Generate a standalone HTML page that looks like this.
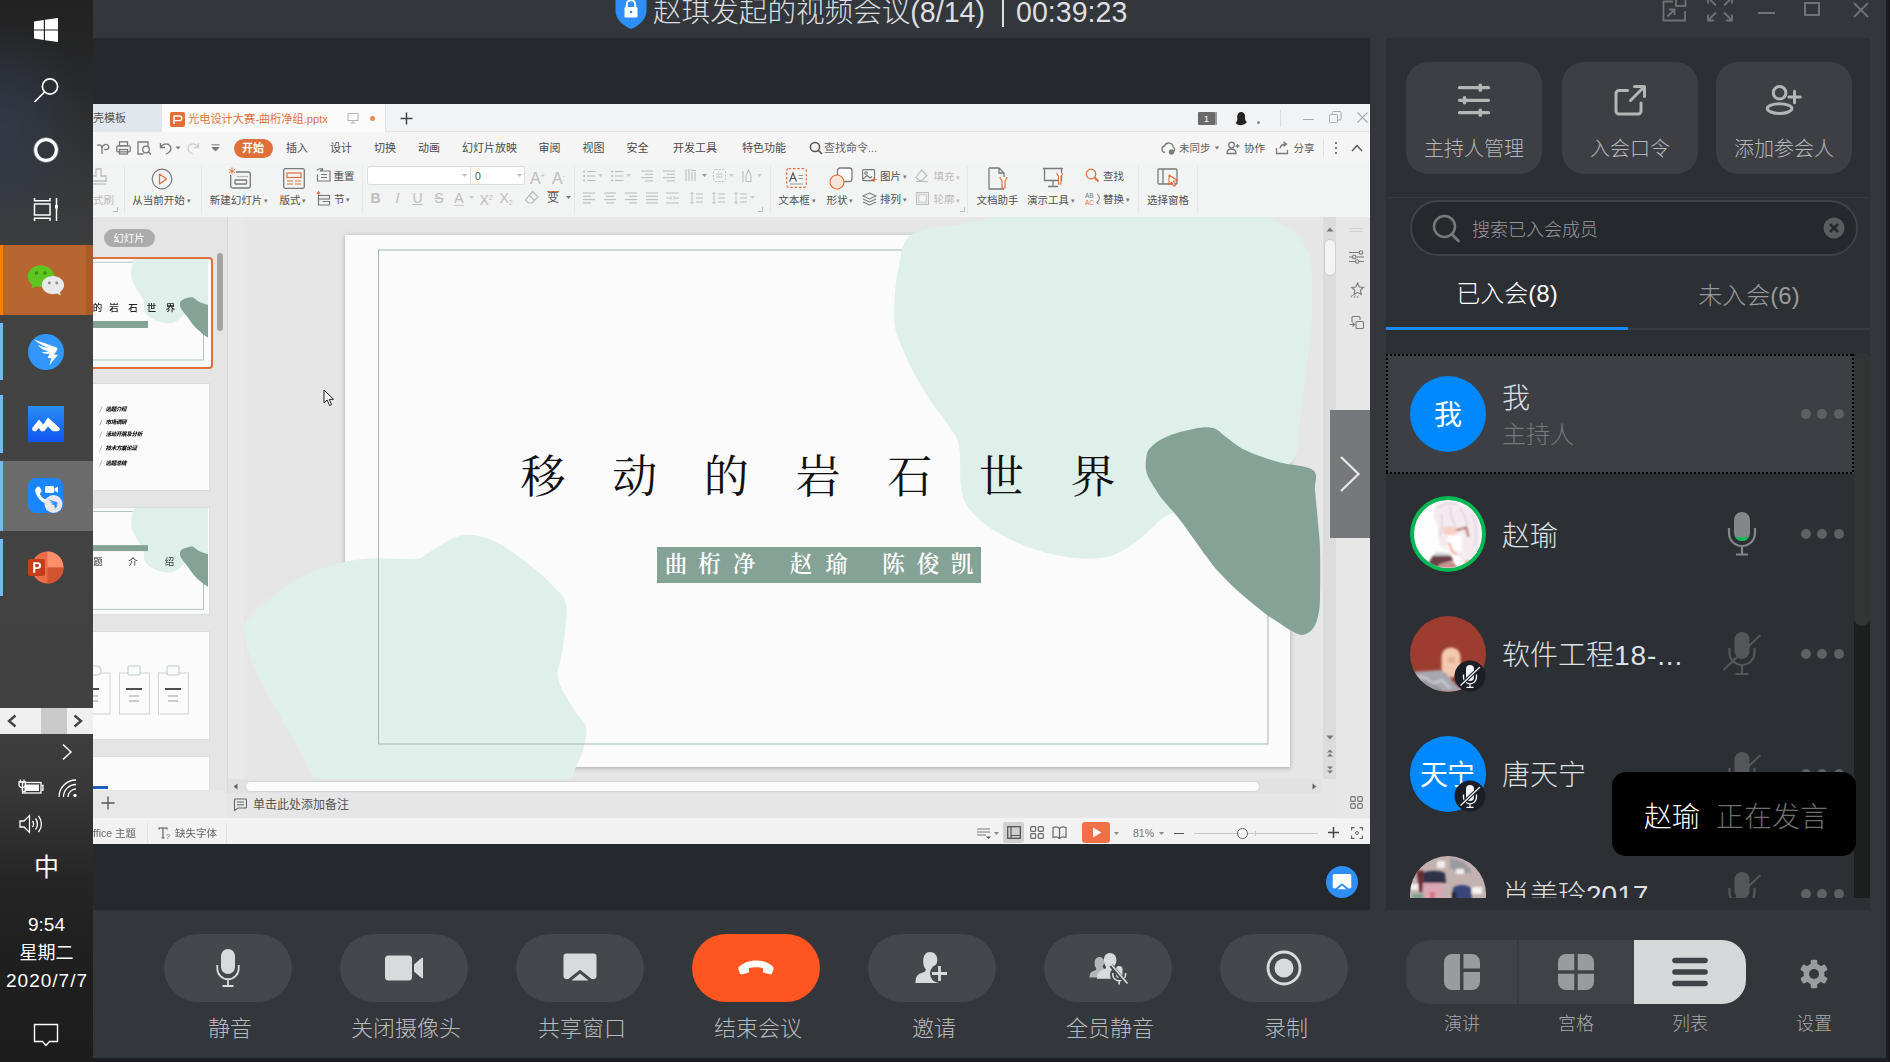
<!DOCTYPE html>
<html lang="zh-CN">
<head>
<meta charset="utf-8">
<title>视频会议</title>
<style>
*{box-sizing:border-box;margin:0;padding:0}
html,body{width:1890px;height:1062px;overflow:hidden;background:#33363b}
body{position:relative;font-family:"Liberation Sans","Noto Sans CJK SC",sans-serif;color:#d6d7d9;font-weight:300}
.abs{position:absolute}
svg{display:block;overflow:visible}
/* ---------- windows taskbar ---------- */
#taskbar{left:0;top:0;width:93px;height:1062px;background:radial-gradient(ellipse 90px 110px at 0px 130px,rgba(52,62,80,.75),rgba(52,62,80,0) 100%),linear-gradient(180deg,#222 0px,#28292b 90px,#37383a 190px,#424242 300px,#434343 400px,#414141 700px,#383838 790px,#252525 880px,#1f1f1f 960px,#1d1d1d 1062px)}
#taskbar .tile{left:0;width:93px}
#taskbar .bar{left:0;width:3px;background:#76b9ed}
#taskbar .txt{font-weight:400;left:0;width:93px;text-align:center;color:#fff;font-size:19px;line-height:22px}
/* ---------- meeting window ---------- */
#titlebar{left:93px;top:0;width:1797px;height:38px;background:#33363b}
#title{left:653px;top:-8.500px;font-size:28.600px;line-height:40px;color:#dddee0;white-space:nowrap}
#stage{left:93px;top:38px;width:1277px;height:872px;background:#25282d}
#panel{left:1386px;top:38px;width:484px;height:872px;background:#2c2f34;overflow:hidden}
#bottombar{left:93px;top:910px;width:1797px;height:148px;background:#33363b}
#bottomline{left:93px;top:1058px;width:1797px;height:4px;background:#1c1f28;border-bottom:1px solid #161616}
#rightline{left:1886px;top:0;width:4px;height:1062px;background:#1b1e25;border-right:1px solid #141414}
#wps{font-weight:400;left:93px;top:104px;width:1277px;height:739.500px;overflow:hidden;background:#e6e6e6}
#wpsin{left:-93px;top:-104px;width:1890px;height:1062px;filter:blur(.35px)}
/* ---------- bottom buttons ---------- */
.pill{width:128px;height:68px;border-radius:34px;background:#44474c;top:934px}
.plabel{top:1013.500px;margin-left:2px;width:200px;text-align:center;font-size:22px;line-height:30px;color:#b9babc}
/* ---------- right panel ---------- */
.pbtn{top:24px;width:136px;height:112px;border-radius:22px;background:#3d3f44}
.pbtn .l{left:0;top:72px;width:136px;text-align:center;font-size:20px;line-height:30px;color:#b6b7b9;font-weight:300}
.row{left:0;width:468px;height:120px}
.row .name{left:116px;font-size:28px;line-height:40px;color:#dcdddf;white-space:nowrap}
.row .dots{left:415px;top:55px}
.dots{white-space:nowrap;font-size:0}.dots i{display:inline-block;width:10px;height:10px;border-radius:5px;background:#5e6064;margin-right:6.400px;vertical-align:top}
.av{left:24px;top:23px;width:74px;height:74px;border-radius:50%}
</style>
</head>
<body>
<!-- ================= WINDOWS TASKBAR ================= -->
<div id="taskbar" class="abs">
  <!-- windows logo -->
  <svg class="abs" style="left:34px;top:18px" width="24" height="24" viewBox="0 0 24 24"><path fill="#fff" d="M0 3.4 9.8 2v9.4H0zM11 1.8 24 0v11.4H11zM0 12.6h9.8V22L0 20.6zM11 12.6h13V24l-13-1.8z"/></svg>
  <!-- search -->
  <svg class="abs" style="left:32px;top:76px" width="28" height="28" viewBox="0 0 28 28"><circle cx="18" cy="10.5" r="7.6" fill="none" stroke="#fff" stroke-width="1.7"/><path d="M12.6 16 2.5 26" stroke="#fff" stroke-width="1.7" fill="none"/></svg>
  <!-- cortana -->
  <svg class="abs" style="left:32px;top:136px" width="28" height="28" viewBox="0 0 28 28"><circle cx="14" cy="14" r="10.3" fill="none" stroke="#fff" stroke-width="3.2"/><circle cx="14" cy="14" r="12.4" fill="none" stroke="#cfcfcf" stroke-width="0.8" opacity=".6"/></svg>
  <!-- task view -->
  <svg class="abs" style="left:33px;top:197px" width="26" height="25" viewBox="0 0 26 25"><g fill="none" stroke="#fff" stroke-width="1.500"><path d="M1.500 1v2.800h15.500V1M1.500 24v-2.800h15.500V24"/><rect x="1.500" y="7" width="15.500" height="11"/><path d="M23.500 1v23"/></g><rect x="22" y="8" width="3" height="3.500" fill="#fff"/></svg>
  <!-- wechat tile -->
  <div class="abs tile" style="top:245px;height:70px;background:#b76630"></div>
  <div class="abs" style="left:86px;top:245px;width:7px;height:70px;background:#a65c2b"></div>
  <div class="abs" style="left:0;top:245px;width:3px;height:70px;background:#ff7c00"></div>
  <svg class="abs" style="left:27px;top:264px" width="38" height="32" viewBox="0 0 38 32">
    <path fill="#5dc621" d="M14 1.5C6.5 1.5.8 6.3.8 12.3c0 3.4 1.9 6.4 4.8 8.4L4.2 24.6l4.7-2.4c1.6.5 3.300.8 5.100.8 7.500 0 13.200-4.800 13.200-10.700S21.500 1.500 14 1.500z"/>
    <circle cx="9.500" cy="9" r="1.700" fill="#3a8a12"/><circle cx="18" cy="9" r="1.700" fill="#3a8a12"/>
    <path fill="#e9e9e9" d="M26 12c-6.300 0-11.200 4.100-11.200 9.100s4.900 9.100 11.200 9.100c1.400 0 2.700-.2 4-.6l3.900 2-1.100-3.300c2.600-1.700 4.300-4.300 4.300-7.200 0-5-4.900-9.100-11.100-9.100z"/>
    <circle cx="22.300" cy="19" r="1.400" fill="#8a8a8a"/><circle cx="29.700" cy="19" r="1.400" fill="#8a8a8a"/>
  </svg>
  <!-- dingtalk -->
  <div class="abs bar" style="top:323px;height:57px"></div>
  <svg class="abs" style="left:28px;top:334px" width="36" height="36" viewBox="0 0 36 36"><circle cx="18" cy="18" r="18" fill="#3296fa"/><path fill="#fff" transform="translate(1 -1)" d="M5 6.500c4.500 1.600 13.500 4.300 22.500 8 1.300.6 1 1.700.6 2.600-.6 1.300-2.800 4.600-2.800 4.600h3.800l-8.700 10.500 1.900-7.200h-3.600l1.800-4.400c-1.900.4-5.500.4-8.100-1.900 0 0 4.900.6 7.500-.4-3.600-.4-8.700-2.300-10.700-6.200 3.200 1.500 8.100 2.800 10.300 2.800-4.500-1.700-11.300-4.900-14.500-8.400z"/></svg>
  <!-- blue square app -->
  <div class="abs bar" style="top:395px;height:58px"></div>
  <svg class="abs" style="left:28px;top:406px" width="36" height="36" viewBox="0 0 36 36"><defs><linearGradient id="gm" x1="0" y1="0" x2="0" y2="1"><stop offset="0" stop-color="#2a8cf5"/><stop offset="1" stop-color="#0f55f0"/></linearGradient></defs><rect width="36" height="36" fill="url(#gm)"/><path fill="#fff" d="M4.500 21.500 11 13.500l4.200 5 4.800-7 11.500 10.500c.8 1.800-.2 3.300-2 3.300h-4.700L20 20.500l-3.800 4.800H13L10.800 22 8 25.300H6c-1.500-.5-2.300-2-1.500-3.800z"/></svg>
  <!-- active meeting tile -->
  <div class="abs tile" style="top:461px;height:70px;background:#6b6b6b"></div>
  <div class="abs bar" style="top:461px;height:70px"></div>
  <svg class="abs" style="left:28px;top:478px" width="36" height="36" viewBox="0 0 36 36"><rect width="35" height="35" rx="8" fill="#1a85ff"/><path fill="#fff" d="M8.800 9.300c1.200-1.200 2.400-1 3.100.2l1.300 2.300c.6 1.100.3 2-.6 2.800-.8.700-.8 1.500-.2 2.500.9 1.500 2 2.700 3.500 3.700.9.600 1.700.5 2.400-.3.800-.9 1.800-1.100 2.800-.500l2.200 1.400c1.200.8 1.300 2 .2 3.100-1.700 1.700-4 2-6.500.800-4.300-2.100-7.500-5.500-9.200-9.800-.9-2.400-.600-4.600 1-6.200z"/><rect x="17" y="8" width="9" height="7" rx="1.500" fill="#fff"/><path fill="#fff" d="M26.500 10.500 30 8.500v6.200l-3.500-2z"/><circle cx="25.500" cy="26" r="9" fill="#e8e8e8"/><path fill="#2b8cf0" d="M20.500 21.500c1.800.6 5.300 1.700 8.800 3.100.5.300.4.700.2 1-.200.500-1.100 1.800-1.100 1.800h1.500l-3.400 4.100.800-2.800h-1.400l.7-1.700c-.8.200-2.200.2-3.200-.800 0 0 1.900.3 2.900-.1-1.400-.200-3.400-.900-4.200-2.400 1.300.6 3.200 1.100 4 1.100-1.700-.7-4.400-1.900-5.600-3.300z"/></svg>
  <!-- powerpoint -->
  <div class="abs bar" style="top:539px;height:57px"></div>
  <svg class="abs" style="left:28px;top:550px" width="36" height="36" viewBox="0 0 36 36"><circle cx="19.500" cy="17.500" r="16" fill="#ed6c47"/><path d="M19.500 1.500a16 16 0 0 1 16 16h-16z" fill="#ff8f6b"/><path d="M19.500 17.500h16a16 16 0 0 1-16 16z" fill="#d35230"/><rect x="0" y="9" width="17" height="17" rx="1.800" fill="#c43e1c"/><path fill="#fff" d="M5.200 12.300h4.300c2.400 0 3.700 1.300 3.700 3.300 0 2.100-1.500 3.400-3.800 3.400H7.300v3.800H5.200zm2.100 1.700v3.300h1.800c1.200 0 1.900-.6 1.900-1.700 0-1-.7-1.600-1.900-1.600z"/></svg>
  <!-- scroller -->
  <div class="abs" style="left:0;top:708px;width:93px;height:26px;background:#f0f0f0"></div>
  <div class="abs" style="left:41px;top:708px;width:26px;height:26px;background:#c9c9c9"></div>
  <svg class="abs" style="left:6px;top:714px" width="12" height="14" viewBox="0 0 12 14"><path d="M9.500 1.500 3 7l6.500 5.500" fill="none" stroke="#444" stroke-width="2.400"/></svg>
  <svg class="abs" style="left:72px;top:714px" width="12" height="14" viewBox="0 0 12 14"><path d="M2.500 1.500 9 7l-6.500 5.500" fill="none" stroke="#444" stroke-width="2.400"/></svg>
  <!-- tray chevron -->
  <svg class="abs" style="left:61px;top:743px" width="12" height="18" viewBox="0 0 12 18"><path d="M2 1.500 10 9l-8 7.500" fill="none" stroke="#fff" stroke-width="1.500"/></svg>
  <!-- battery -->
  <svg class="abs" style="left:18px;top:779px" width="26" height="16" viewBox="0 0 26 16"><g fill="none" stroke="#fff" stroke-width="1.300"><rect x="4.500" y="3.500" width="18.500" height="10.500"/><path d="M23.500 6.500h1.500v4.500h-1.500"/><path d="M2.500 0.500v2.500M6 0.500v2.500M1 3h6.500v2.500c0 1.800-1.400 3-3.200 3S1 7.300 1 5.500zM4.300 8.500v2.500c0 1 .6 1.500 1.500 1.500h2"/></g><rect x="6.500" y="5.500" width="14.500" height="6.500" fill="#fff"/></svg>
  <!-- wifi -->
  <svg class="abs" style="left:58px;top:778px" width="22" height="20" viewBox="0 0 22 20"><g fill="none" stroke="#fff" stroke-width="1.300"><path d="M1 19C1 9.500 8.500 2 18 2"/><path d="M5.500 19C5.500 12 11 6.500 18 6.500"/><path d="M10 19c0-4.400 3.600-8 8-8"/></g><circle cx="17" cy="17.500" r="1.700" fill="#fff"/></svg>
  <!-- volume -->
  <svg class="abs" style="left:19px;top:814px" width="24" height="20" viewBox="0 0 24 20"><g fill="none" stroke="#fff" stroke-width="1.300"><path d="M1 7h4l5.500-5.500v17L5 13H1z"/><path d="M13.500 7c1.300 1.700 1.300 4.300 0 6"/><path d="M16.500 4.500c2.600 3.200 2.600 7.800 0 11"/><path d="M19.500 2c3.900 4.700 3.900 11.300 0 16"/></g></svg>
  <div class="abs txt" style="top:852px;font-size:25px;line-height:30px;font-weight:400">中</div>
  <div class="abs txt" style="top:914px">9:54</div>
  <div class="abs txt" style="top:942px;font-size:18px">星期二</div>
  <div class="abs txt" style="top:970px;letter-spacing:1px;text-indent:1px">2020/7/7</div>
  <!-- notifications -->
  <svg class="abs" style="left:33px;top:1023px" width="26" height="26" viewBox="0 0 26 26"><path d="M1.500 1.500h23v17h-8L13 22.500 9.500 18.500h-8z" fill="none" stroke="#fff" stroke-width="1.400"/></svg>
</div>

<!-- ================= TITLE BAR ================= -->
<div id="titlebar" class="abs"></div>
<svg class="abs" style="left:615px;top:-8px" width="32" height="38" viewBox="0 0 32 38"><path d="M16 0 31.500 5v13.500c0 8-6 14.500-15.500 18.500C6.500 33 0.500 26.500 0.500 18.500V5z" fill="#2d8ff5"/><rect x="9.500" y="15" width="13" height="10.500" rx="1.200" fill="#fff"/><path d="M11.800 15.500v-3a4.200 4.200 0 0 1 8.400 0v3" fill="none" stroke="#fff" stroke-width="2"/><circle cx="16" cy="20" r="1.300" fill="#2d8ff5"/></svg>
<div id="title" class="abs">赵琪发起的视频会议(8/14)<span style="display:inline-block;width:2px;height:28px;background:#dddee0;margin:0 12px 0 17px;vertical-align:-5px"></span>00:39:23</div>
<!-- window controls -->
<svg class="abs" style="left:1662px;top:-4px" width="26" height="26" viewBox="0 0 26 26"><g fill="none" stroke="#6f7276" stroke-width="1.800"><path d="M11 5.500H1.500v19H23V15"/><rect x="14" y="0.500" width="9.500" height="9.500"/><path d="M5.500 20.500 12 14M7 13.500h5.500V19"/></g></svg>
<svg class="abs" style="left:1707px;top:-4px" width="26" height="26" viewBox="0 0 26 26"><g fill="none" stroke="#6f7276" stroke-width="1.800"><path d="M1 5V1h0M25 5V1M1 7.500V1.500h6M19 1.500h6v6M1 18.500v6h6M25 18.500v6h-6M1.500 2 9 9.500M24.500 2 17 9.500M1.500 24 9 16.500M24.500 24 17 16.500"/></g></svg>
<div class="abs" style="left:1758px;top:12px;width:17px;height:2px;background:#6f7276"></div>
<div class="abs" style="left:1804px;top:2px;width:16px;height:14px;border:2px solid #6f7276"></div>
<svg class="abs" style="left:1853px;top:2px" width="16" height="16" viewBox="0 0 16 16"><path d="M1 1 15 15M15 1 1 15" stroke="#6f7276" stroke-width="1.800"/></svg>

<!-- ================= STAGE ================= -->
<div id="stage" class="abs"></div>
<!-- ===== shared screen (WPS) ===== -->
<div id="wps" class="abs"><div id="wpsin" class="abs">
<!--WPS-BEGIN-->
<div class="abs" style="left:93px;top:104px;width:1277px;height:28px;background:#f1f3f5;"></div>
<div class="abs" style="left:93px;top:131px;width:1277px;height:1px;background:#e3e5e7;"></div>
<div class="abs" style="left:93px;top:132px;width:1277px;height:31px;background:#f5f5f5;"></div>
<div class="abs" style="left:93px;top:163px;width:1277px;height:54px;background:#f2f3f3;"></div>
<div class="abs" style="left:93px;top:217px;width:1277px;height:602px;background:#e6e6e6;"></div>
<div class="abs" style="left:93px;top:818px;width:1277px;height:26px;background:#f2f2f2;"></div>
<div class="abs" style="left:93px;top:104px;width:68px;height:27px;background:#e2e7eb;"></div>
<div class="abs" style="left:93.0px;top:110.0px;font-size:11px;line-height:16px;color:#555;white-space:nowrap;">壳模板</div>
<div class="abs" style="left:161px;top:104px;width:225px;height:28px;background:#fbfbfb;border-left:1px solid #dfe3e6;border-right:1px solid #dfe3e6"></div>
<svg class="abs" style="left:170px;top:112px" width="15" height="15" viewBox="0 0 15 15"><rect width="15" height="15" rx="2" fill="#e0703a"/><path d="M4 12V4h5.500a2.300 2.300 0 0 1 0 4.600H4.500" fill="none" stroke="#fff" stroke-width="1.400"/></svg>
<div class="abs" style="left:188.0px;top:110.5px;font-size:11.2px;line-height:16px;color:#e0703a;white-space:nowrap;">光电设计大赛-曲桁净组.pptx</div>
<svg class="abs" style="left:347px;top:112px" width="12" height="12" viewBox="0 0 12 12"><rect x="1" y="1.500" width="10" height="7" fill="none" stroke="#b5b5b5" stroke-width="1"/><path d="M6 8.500v2.500M3.500 11h5" stroke="#b5b5b5" stroke-width="1"/></svg>
<div class="abs" style="left:370px;top:116px;width:5px;height:5px;background:#e98b4c;border-radius:50%"></div>
<svg class="abs" style="left:400px;top:112px" width="13" height="13" viewBox="0 0 13 13"><path d="M6.500 0.500v12M0.500 6.500h12" stroke="#444" stroke-width="1.500"/></svg>
<div class="abs" style="left:1198px;top:112px;width:17px;height:13px;background:#6a6a6a;border-radius:1px"></div>
<div class="abs" style="left:1215px;top:112px;width:2px;height:13px;background:#9a9a9a;"></div>
<div class="abs" style="left:1198.5px;width:16px;text-align:center;top:110.5px;font-size:9px;line-height:16px;color:#fff;white-space:nowrap;">1</div>
<svg class="abs" style="left:1233px;top:110px" width="16" height="16" viewBox="0 0 16 16"><circle cx="8" cy="8" r="7.500" fill="#efefef"/><path d="M8 2c3 0 4.500 2.500 4 5.500-.3 2 .8 3.500 2 4.500A7.500 7.500 0 0 1 2.500 13c1.500-1 2-2.500 1.800-4.500C4 5 5 2 8 2z" fill="#222"/></svg>
<div class="abs" style="left:1257px;top:121px;width:3px;height:3px;background:#888;border-radius:50%"></div>
<div class="abs" style="left:1280px;top:110px;width:1px;height:17px;background:#dcdcdc;"></div>
<div class="abs" style="left:1303px;top:119px;width:11px;height:1px;background:#aaa;"></div>
<svg class="abs" style="left:1329px;top:111px" width="13" height="13" viewBox="0 0 13 13"><rect x="0.500" y="3.500" width="8" height="8" rx="1" fill="none" stroke="#aaa"/><path d="M3.500 3V1.500a1 1 0 0 1 1-1h6.500a1 1 0 0 1 1 1V8a1 1 0 0 1-1 1H9" fill="none" stroke="#aaa"/></svg>
<svg class="abs" style="left:1357px;top:112px" width="11" height="11" viewBox="0 0 11 11"><path d="M0.500 0.500l10 10M10.500 0.500l-10 10" stroke="#aaa" stroke-width="1.100"/></svg>
<svg class="abs" style="left:96px;top:141px" width="14" height="14" viewBox="0 0 14 14"><path d="M6 13V7.500M6 7.500C6 4 3 3 1 4.500M6 7.500c0-4 5-5.500 6.500-2.500S10 9.500 8 8" fill="none" stroke="#7a7a7a" stroke-width="1.300"/></svg>
<svg class="abs" style="left:116px;top:141px" width="15" height="14" viewBox="0 0 15 14"><g fill="none" stroke="#7a7a7a" stroke-width="1.300"><rect x="3.500" y="0.800" width="8" height="4"/><rect x="0.800" y="4.800" width="13.400" height="6" rx="1"/><rect x="3.500" y="8.500" width="8" height="4.500"/></g></svg>
<svg class="abs" style="left:137px;top:141px" width="15" height="14" viewBox="0 0 15 14"><g fill="none" stroke="#7a7a7a" stroke-width="1.300"><path d="M11 6V1H1v12h5.500"/><circle cx="9" cy="8.500" r="3.300"/><path d="M11.500 11l2.500 2.500"/></g></svg>
<svg class="abs" style="left:159px;top:141px" width="14" height="14" viewBox="0 0 14 14"><path d="M1.500 2v4.500H6M1.800 6.300C3 3.500 6.500 2 9.500 3.500c3 1.700 3.300 5.800.300 8L7 13" fill="none" stroke="#7a7a7a" stroke-width="1.400"/></svg>
<svg class="abs" style="left:175px;top:146px" width="6" height="4" viewBox="0 0 6 4"><path d="M0.500 0.500h5L3 3.500z" fill="#7a7a7a"/></svg>
<svg class="abs" style="left:186px;top:141px" width="14" height="14" viewBox="0 0 14 14"><path d="M12.500 2v4.500H8M12.200 6.300C11 3.500 7.500 2 4.500 3.500c-3 1.700-3.300 5.800-.300 8L7 13" fill="none" stroke="#cfcfcf" stroke-width="1.400"/></svg>
<svg class="abs" style="left:211px;top:144px" width="9" height="8" viewBox="0 0 9 8"><path d="M0.500 0.800h8M1 3.500l3.500 3.500L8 3.500z" fill="#7a7a7a" stroke="#7a7a7a" stroke-width="1"/></svg>
<div class="abs" style="left:233.5px;top:139px;width:39px;height:18.5px;background:#e0703a;border-radius:9.500px"></div>
<div class="abs" style="left:233.0px;width:40px;text-align:center;top:140.0px;font-size:11px;line-height:16px;color:#fff;white-space:nowrap;font-weight:700">开始</div>
<div class="abs" style="left:252.0px;width:90px;text-align:center;top:140.0px;font-size:11px;line-height:16px;color:#4a4a4a;white-space:nowrap;">插入</div>
<div class="abs" style="left:296.0px;width:90px;text-align:center;top:140.0px;font-size:11px;line-height:16px;color:#4a4a4a;white-space:nowrap;">设计</div>
<div class="abs" style="left:340.0px;width:90px;text-align:center;top:140.0px;font-size:11px;line-height:16px;color:#4a4a4a;white-space:nowrap;">切换</div>
<div class="abs" style="left:384.0px;width:90px;text-align:center;top:140.0px;font-size:11px;line-height:16px;color:#4a4a4a;white-space:nowrap;">动画</div>
<div class="abs" style="left:444.5px;width:90px;text-align:center;top:140.0px;font-size:11px;line-height:16px;color:#4a4a4a;white-space:nowrap;">幻灯片放映</div>
<div class="abs" style="left:504.5px;width:90px;text-align:center;top:140.0px;font-size:11px;line-height:16px;color:#4a4a4a;white-space:nowrap;">审阅</div>
<div class="abs" style="left:548.5px;width:90px;text-align:center;top:140.0px;font-size:11px;line-height:16px;color:#4a4a4a;white-space:nowrap;">视图</div>
<div class="abs" style="left:592.5px;width:90px;text-align:center;top:140.0px;font-size:11px;line-height:16px;color:#4a4a4a;white-space:nowrap;">安全</div>
<div class="abs" style="left:650.0px;width:90px;text-align:center;top:140.0px;font-size:11px;line-height:16px;color:#4a4a4a;white-space:nowrap;">开发工具</div>
<div class="abs" style="left:719.0px;width:90px;text-align:center;top:140.0px;font-size:11px;line-height:16px;color:#4a4a4a;white-space:nowrap;">特色功能</div>
<svg class="abs" style="left:809px;top:141px" width="14" height="14" viewBox="0 0 14 14"><circle cx="6" cy="6" r="4.600" fill="none" stroke="#555" stroke-width="1.500"/><path d="M9.300 9.300l3.700 3.700" stroke="#555" stroke-width="1.600"/></svg>
<div class="abs" style="left:824.0px;top:140.0px;font-size:11px;line-height:16px;color:#666;white-space:nowrap;">查找命令...</div>
<svg class="abs" style="left:1161px;top:141px" width="15" height="14" viewBox="0 0 15 14"><path d="M4 11.500a3.300 3.300 0 0 1-.500-6.500 4.500 4.500 0 0 1 8.700 1A2.800 2.800 0 0 1 12 11" fill="none" stroke="#7a7a7a" stroke-width="1.300"/><circle cx="10.500" cy="11" r="2.700" fill="#7a7a7a"/></svg>
<div class="abs" style="left:1179.0px;top:140.0px;font-size:10.5px;line-height:16px;color:#666;white-space:nowrap;">未同步</div>
<svg class="abs" style="left:1214px;top:146px" width="6" height="4" viewBox="0 0 6 4"><path d="M0.500 0.500h5L3 3.500z" fill="#7a7a7a"/></svg>
<svg class="abs" style="left:1226px;top:141px" width="14" height="14" viewBox="0 0 14 14"><g fill="none" stroke="#7a7a7a" stroke-width="1.300"><circle cx="5.500" cy="4" r="2.800"/><path d="M1 12.500c0-3 2-4.500 4.500-4.500s4.500 1.500 4.500 4.500zM9.500 5h4M11.500 3v4"/></g></svg>
<div class="abs" style="left:1244.0px;top:140.0px;font-size:10.5px;line-height:16px;color:#555;white-space:nowrap;">协作</div>
<svg class="abs" style="left:1275px;top:141px" width="14" height="14" viewBox="0 0 14 14"><path d="M1.500 7v5.500h11V9M5 7.500c.500-3 2.500-4.500 6-4.500M8.500 0.800 11.500 3 8.500 5.500" fill="none" stroke="#7a7a7a" stroke-width="1.300"/></svg>
<div class="abs" style="left:1293.5px;top:140.0px;font-size:10.5px;line-height:16px;color:#555;white-space:nowrap;">分享</div>
<div class="abs" style="left:1323px;top:139px;width:1px;height:18px;background:#e3e3e3;"></div>
<div class="abs" style="left:1334.5px;top:142px;width:2px;height:2px;background:#555;border-radius:50%"></div>
<div class="abs" style="left:1334.5px;top:147px;width:2px;height:2px;background:#555;border-radius:50%"></div>
<div class="abs" style="left:1334.5px;top:152px;width:2px;height:2px;background:#555;border-radius:50%"></div>
<svg class="abs" style="left:1351px;top:144px" width="12" height="8" viewBox="0 0 12 8"><path d="M1 7 6 1.500 11 7" fill="none" stroke="#555" stroke-width="1.300"/></svg>
<div class="abs" style="left:123.5px;top:166px;width:1px;height:48px;background:#e6e7e8;"></div>
<div class="abs" style="left:201px;top:166px;width:1px;height:48px;background:#e6e7e8;"></div>
<div class="abs" style="left:361.5px;top:166px;width:1px;height:48px;background:#e6e7e8;"></div>
<div class="abs" style="left:574px;top:166px;width:1px;height:48px;background:#e6e7e8;"></div>
<div class="abs" style="left:769.5px;top:166px;width:1px;height:48px;background:#e6e7e8;"></div>
<div class="abs" style="left:966.5px;top:166px;width:1px;height:48px;background:#e6e7e8;"></div>
<div class="abs" style="left:1137.5px;top:166px;width:1px;height:48px;background:#e6e7e8;"></div>
<div class="abs" style="left:1197px;top:166px;width:1px;height:48px;background:#e6e7e8;"></div>
<svg class="abs" style="left:93px;top:168px" width="16" height="20" viewBox="0 0 16 20"><path d="M3 1h5v7h5v5H-2V8h5z" fill="none" stroke="#bdbdbd" stroke-width="1.300"/><path d="M-2 16h15" stroke="#bdbdbd" stroke-width="1.300"/></svg>
<div class="abs" style="left:93.0px;top:192.0px;font-size:10.5px;line-height:16px;color:#bdbdbd;white-space:nowrap;">式刷</div>
<svg class="abs" style="left:113px;top:207px" width="5" height="5" viewBox="0 0 5 5"><path d="M4.500 0v4.500H0" fill="none" stroke="#bdbdbd"/></svg>
<svg class="abs" style="left:151px;top:168px" width="22" height="22" viewBox="0 0 22 22"><circle cx="11" cy="11" r="9.800" fill="none" stroke="#7a7a7a" stroke-width="1.200"/><path d="M8.500 6 15.500 11 8.500 16z" fill="none" stroke="#e0703a" stroke-width="1.200" stroke-linejoin="round"/></svg>
<div class="abs" style="left:116.5px;width:90px;text-align:center;top:192.0px;font-size:10.5px;line-height:16px;color:#505050;white-space:nowrap;">从当前开始<span style="font-size:7px;color:#777;vertical-align:1.500px"> ▾</span></div>
<svg class="abs" style="left:228px;top:167px" width="24" height="22" viewBox="0 0 24 22"><g fill="none" stroke="#7a7a7a" stroke-width="1.300"><rect x="2.700" y="5" width="19.600" height="16" rx="2"/><rect x="7" y="13" width="11.500" height="4" rx=".5"/></g><path d="M9 9.500h11" stroke="#b5b5b5" stroke-width="1.100"/><rect x="0" y="0" width="8" height="8" fill="#f2f3f3"/><path d="M4 0.500v7M1 2.300l6 3.400M7 2.300l-6 3.400" stroke="#e0703a" stroke-width=".9"/></svg>
<div class="abs" style="left:194.0px;width:90px;text-align:center;top:192.0px;font-size:10.5px;line-height:16px;color:#505050;white-space:nowrap;">新建幻灯片<span style="font-size:7px;color:#777;vertical-align:1.500px"> ▾</span></div>
<svg class="abs" style="left:283px;top:168px" width="22" height="21" viewBox="0 0 22 21"><g fill="none" stroke="#e0703a" stroke-width="1.200"><rect x="4" y="5" width="14" height="4.500"/><path d="M4 13h6M12 13h6M4 16h6M12 16h6"/></g><rect x="0.700" y="0.700" width="20.600" height="19.600" rx="1.500" fill="none" stroke="#7a7a7a" stroke-width="1.300"/></svg>
<div class="abs" style="left:263.0px;width:60px;text-align:center;top:192.0px;font-size:10.5px;line-height:16px;color:#505050;white-space:nowrap;">版式<span style="font-size:7px;color:#777;vertical-align:1.500px"> ▾</span></div>
<svg class="abs" style="left:316px;top:168px" width="15" height="14" viewBox="0 0 15 14"><g fill="none" stroke="#7a7a7a" stroke-width="1.200"><path d="M4 3h10v10H1.500V6.500"/><path d="M1 2.500c1-2 4-2.500 5.500-.500M6.500 0v2.500H4"/><path d="M5 6.500h6M5 9.500h6"/></g></svg>
<div class="abs" style="left:333.5px;top:167.5px;font-size:10.5px;line-height:16px;color:#505050;white-space:nowrap;">重置</div>
<svg class="abs" style="left:316px;top:191px" width="15" height="15" viewBox="0 0 15 15"><g fill="none" stroke="#7a7a7a" stroke-width="1.200"><rect x="2.500" y="4.500" width="11" height="3.500"/><path d="M2.500 8v6h11v-3.500h-7"/></g><path d="M2.500 0v4M0.800 1l3.400 2M4.200 1 0.800 3" stroke="#e0703a" stroke-width=".9"/></svg>
<div class="abs" style="left:334.0px;top:191.0px;font-size:10.5px;line-height:16px;color:#505050;white-space:nowrap;">节<span style="font-size:7px;color:#777;vertical-align:1.500px"> ▾</span></div>
<div class="abs" style="left:366.5px;top:166px;width:158.5px;height:19px;background:#fff;border:1px solid #dcdcdc;border-radius:3px"></div>
<div class="abs" style="left:469.5px;top:166px;width:1px;height:19px;background:#dcdcdc;"></div>
<svg class="abs" style="left:462px;top:174px" width="5" height="3" viewBox="0 0 5 3"><path d="M0 0h5L2.500 3z" fill="#bbb"/></svg>
<svg class="abs" style="left:517px;top:174px" width="5" height="3" viewBox="0 0 5 3"><path d="M0 0h5L2.500 3z" fill="#bbb"/></svg>
<div class="abs" style="left:475.0px;top:167.5px;font-size:10.5px;line-height:16px;color:#555;white-space:nowrap;">0</div>
<div class="abs" style="left:530.0px;top:167.5px;font-size:16px;line-height:16px;color:#bdbdbd;white-space:nowrap;font-family:Liberation Sans,sans-serif">A<sup style="font-size:7px;vertical-align:6px">+</sup></div>
<div class="abs" style="left:552.0px;top:167.5px;font-size:16px;line-height:16px;color:#bdbdbd;white-space:nowrap;font-family:Liberation Sans,sans-serif">A<sup style="font-size:7px;vertical-align:6px">-</sup></div>
<div class="abs" style="left:360.5px;width:30px;text-align:center;top:190.0px;font-size:14px;line-height:16px;color:#bdbdbd;white-space:nowrap;font-weight:700">B</div>
<div class="abs" style="left:382.5px;width:30px;text-align:center;top:190.0px;font-size:14px;line-height:16px;color:#bdbdbd;white-space:nowrap;font-style:italic">I</div>
<div class="abs" style="left:402.5px;width:30px;text-align:center;top:190.0px;font-size:14px;line-height:16px;color:#bdbdbd;white-space:nowrap;text-decoration:underline">U</div>
<div class="abs" style="left:424.0px;width:30px;text-align:center;top:190.0px;font-size:14px;line-height:16px;color:#bdbdbd;white-space:nowrap;text-decoration:line-through">S</div>
<div class="abs" style="left:444.0px;width:30px;text-align:center;top:190.0px;font-size:14px;line-height:16px;color:#bdbdbd;white-space:nowrap;"><span style="border-bottom:1.500px solid #ccc;display:inline-block;line-height:13px">A</span></div>
<div class="abs" style="left:471.0px;width:30px;text-align:center;top:190.0px;font-size:14px;line-height:16px;color:#bdbdbd;white-space:nowrap;">X<sup style="font-size:7px;vertical-align:5px">2</sup></div>
<div class="abs" style="left:491.0px;width:30px;text-align:center;top:190.0px;font-size:14px;line-height:16px;color:#bdbdbd;white-space:nowrap;">X<sub style="font-size:7px;vertical-align:-2px">2</sub></div>
<svg class="abs" style="left:469px;top:196px" width="5" height="3" viewBox="0 0 5 3"><path d="M0 0h5L2.500 3z" fill="#ccc"/></svg>
<svg class="abs" style="left:524px;top:190px" width="15" height="15" viewBox="0 0 15 15"><path d="M8.500 1.500 14 7 8 13H4.500L1.500 10zM5 5l5.500 5.500" fill="none" stroke="#bdbdbd" stroke-width="1.200"/></svg>
<div class="abs" style="left:543.0px;width:20px;text-align:center;top:190.0px;font-size:12px;line-height:16px;color:#555;white-space:nowrap;"><span style="border-top:1.500px solid #e0703a;display:inline-block;line-height:12px">变</span></div>
<svg class="abs" style="left:566px;top:196px" width="5" height="3" viewBox="0 0 5 3"><path d="M0 0h5L2.500 3z" fill="#777"/></svg>
<svg class="abs" style="left:583px;top:169.5px" width="13" height="12" viewBox="0 0 13 12"><circle cx="1.200" cy="1.5" r="1.100" fill="#bdbdbd"/><path d="M4 1.5h8.500" stroke="#bdbdbd" stroke-width="1.100"/><circle cx="1.200" cy="6.0" r="1.100" fill="#bdbdbd"/><path d="M4 6.0h8.500" stroke="#bdbdbd" stroke-width="1.100"/><circle cx="1.200" cy="10.5" r="1.100" fill="#bdbdbd"/><path d="M4 10.5h8.500" stroke="#bdbdbd" stroke-width="1.100"/></svg>
<svg class="abs" style="left:598px;top:174px" width="5" height="3" viewBox="0 0 5 3"><path d="M0 0h5L2.500 3z" fill="#ccc"/></svg>
<svg class="abs" style="left:611px;top:169.5px" width="13" height="12" viewBox="0 0 13 12"><circle cx="1.200" cy="1.5" r="1.100" fill="#bdbdbd"/><path d="M4 1.5h8.500" stroke="#bdbdbd" stroke-width="1.100"/><circle cx="1.200" cy="6.0" r="1.100" fill="#bdbdbd"/><path d="M4 6.0h8.500" stroke="#bdbdbd" stroke-width="1.100"/><circle cx="1.200" cy="10.5" r="1.100" fill="#bdbdbd"/><path d="M4 10.5h8.500" stroke="#bdbdbd" stroke-width="1.100"/></svg>
<svg class="abs" style="left:626px;top:174px" width="5" height="3" viewBox="0 0 5 3"><path d="M0 0h5L2.500 3z" fill="#ccc"/></svg>
<svg class="abs" style="left:641px;top:169.5px" width="12" height="12" viewBox="0 0 12 12"><path d="M0 1.0h12" stroke="#bdbdbd" stroke-width="1.100"/><path d="M4 4.3h8" stroke="#bdbdbd" stroke-width="1.100"/><path d="M0 7.6h12" stroke="#bdbdbd" stroke-width="1.100"/><path d="M4 10.9h8" stroke="#bdbdbd" stroke-width="1.100"/></svg>
<svg class="abs" style="left:662.5px;top:169.5px" width="12" height="12" viewBox="0 0 12 12"><path d="M0 1.0h12" stroke="#bdbdbd" stroke-width="1.100"/><path d="M4 4.3h8" stroke="#bdbdbd" stroke-width="1.100"/><path d="M0 7.6h12" stroke="#bdbdbd" stroke-width="1.100"/><path d="M4 10.9h8" stroke="#bdbdbd" stroke-width="1.100"/></svg>
<svg class="abs" style="left:685px;top:169px" width="13" height="13" viewBox="0 0 13 13"><path d="M1 0v12M4 0v12M7 3v9M10 3v9M6 1.500h5" stroke="#bdbdbd" stroke-width="1.100" fill="none"/></svg>
<svg class="abs" style="left:702px;top:174px" width="5" height="3" viewBox="0 0 5 3"><path d="M0 0h5L2.500 3z" fill="#999"/></svg>
<svg class="abs" style="left:713px;top:169px" width="13" height="13" viewBox="0 0 13 13"><rect x="0.500" y="0.500" width="12" height="12" rx="2" fill="none" stroke="#bdbdbd" stroke-dasharray="2 1.500"/><path d="M3.500 5h6M3.500 8h6" stroke="#bdbdbd"/></svg>
<svg class="abs" style="left:729px;top:174px" width="5" height="3" viewBox="0 0 5 3"><path d="M0 0h5L2.500 3z" fill="#ccc"/></svg>
<svg class="abs" style="left:742px;top:169px" width="12" height="13" viewBox="0 0 12 13"><path d="M1 2v11M4 6.500 6.500 1 9 6.500v6H4z" fill="none" stroke="#bdbdbd" stroke-width="1.100"/></svg>
<svg class="abs" style="left:757px;top:174px" width="5" height="3" viewBox="0 0 5 3"><path d="M0 0h5L2.500 3z" fill="#ccc"/></svg>
<svg class="abs" style="left:583px;top:192px" width="12" height="12" viewBox="0 0 12 12"><path d="M0 1.0h12" stroke="#bdbdbd" stroke-width="1.100"/><path d="M0 4.3h8" stroke="#bdbdbd" stroke-width="1.100"/><path d="M0 7.6h12" stroke="#bdbdbd" stroke-width="1.100"/><path d="M0 10.9h8" stroke="#bdbdbd" stroke-width="1.100"/></svg>
<svg class="abs" style="left:604px;top:192px" width="12" height="12" viewBox="0 0 12 12"><path d="M0 1.0h12" stroke="#bdbdbd" stroke-width="1.100"/><path d="M2 4.3h8" stroke="#bdbdbd" stroke-width="1.100"/><path d="M0 7.6h12" stroke="#bdbdbd" stroke-width="1.100"/><path d="M2 10.9h8" stroke="#bdbdbd" stroke-width="1.100"/></svg>
<svg class="abs" style="left:624.5px;top:192px" width="12" height="12" viewBox="0 0 12 12"><path d="M0 1.0h12" stroke="#bdbdbd" stroke-width="1.100"/><path d="M4 4.3h8" stroke="#bdbdbd" stroke-width="1.100"/><path d="M0 7.6h12" stroke="#bdbdbd" stroke-width="1.100"/><path d="M4 10.9h8" stroke="#bdbdbd" stroke-width="1.100"/></svg>
<svg class="abs" style="left:645.5px;top:192px" width="12" height="12" viewBox="0 0 12 12"><path d="M0 1.0h12" stroke="#bdbdbd" stroke-width="1.100"/><path d="M0 4.3h12" stroke="#bdbdbd" stroke-width="1.100"/><path d="M0 7.6h12" stroke="#bdbdbd" stroke-width="1.100"/><path d="M0 10.9h12" stroke="#bdbdbd" stroke-width="1.100"/></svg>
<svg class="abs" style="left:666px;top:192px" width="13" height="12" viewBox="0 0 13 12"><path d="M0 1h13M0 11h13M0 6h4M9 6h4M5 4.500v3M8 4.500v3" stroke="#bdbdbd" stroke-width="1.100"/></svg>
<svg class="abs" style="left:689.5px;top:192px" width="13" height="12" viewBox="0 0 13 12"><path d="M2 0.500v11M0.500 2 2 0.500 3.500 2M0.500 10 2 11.500 3.500 10M6 2h7M6 6h7M6 10h7" fill="none" stroke="#bdbdbd" stroke-width="1"/></svg>
<svg class="abs" style="left:711.5px;top:192px" width="13" height="12" viewBox="0 0 13 12"><path d="M2 0.500v11M0.500 2 2 0.500 3.500 2M0.500 10 2 11.500 3.500 10M6 2h7M6 6h7M6 10h7" fill="none" stroke="#bdbdbd" stroke-width="1"/></svg>
<svg class="abs" style="left:733.5px;top:192px" width="13" height="12" viewBox="0 0 13 12"><path d="M2 0.500v11M0.500 2 2 0.500 3.500 2M0.500 10 2 11.500 3.500 10M6 2h7M6 6h7M6 10h7" fill="none" stroke="#bdbdbd" stroke-width="1"/></svg>
<svg class="abs" style="left:750px;top:196px" width="5" height="3" viewBox="0 0 5 3"><path d="M0 0h5L2.500 3z" fill="#ccc"/></svg>
<svg class="abs" style="left:758px;top:207px" width="5" height="5" viewBox="0 0 5 5"><path d="M4.500 0v4.500H0" fill="none" stroke="#bdbdbd"/></svg>
<svg class="abs" style="left:786px;top:168px" width="21" height="20" viewBox="0 0 21 20"><rect x="0.700" y="0.700" width="19.600" height="18.600" rx="2" fill="none" stroke="#e0703a" stroke-width="1.200" stroke-dasharray="2.500 1.800"/><path d="M3.500 13.500 7 5l3.500 8.500M4.800 10.500h4.400" fill="none" stroke="#555" stroke-width="1.200"/><path d="M12.500 7.500h4.500M12.500 10.500h4.500M4 16h13" stroke="#999" stroke-width="1"/></svg>
<div class="abs" style="left:762.0px;width:70px;text-align:center;top:192.0px;font-size:10.5px;line-height:16px;color:#505050;white-space:nowrap;">文本框<span style="font-size:7px;color:#777;vertical-align:1.500px"> ▾</span></div>
<svg class="abs" style="left:829px;top:167px" width="24" height="23" viewBox="0 0 24 23"><rect x="8.500" y="1" width="14.500" height="13.500" rx="2.500" fill="#fff" stroke="#7a7a7a" stroke-width="1.300"/><circle cx="8" cy="15" r="7" fill="#f7e3d8" stroke="#e0703a" stroke-width="1.200"/></svg>
<div class="abs" style="left:810.0px;width:60px;text-align:center;top:192.0px;font-size:10.5px;line-height:16px;color:#505050;white-space:nowrap;">形状<span style="font-size:7px;color:#777;vertical-align:1.500px"> ▾</span></div>
<svg class="abs" style="left:862px;top:169px" width="15" height="13" viewBox="0 0 15 13"><g fill="none" stroke="#7a7a7a" stroke-width="1.100"><rect x="0.600" y="0.600" width="12" height="11" rx="1"/><circle cx="4" cy="4" r="1.300"/><path d="M1 10l4-3.500 3 2.500 2-1.500"/></g><path d="M12 8v5M9.500 10.500h5" stroke="#e0703a" stroke-width="1.100"/></svg>
<div class="abs" style="left:880.0px;top:168.0px;font-size:10.5px;line-height:16px;color:#505050;white-space:nowrap;">图片<span style="font-size:7px;color:#777;vertical-align:1.500px"> ▾</span></div>
<svg class="abs" style="left:915px;top:169px" width="15" height="13" viewBox="0 0 15 13"><path d="M6.500 1 12 6.500 7 11.500H4L1 8.500zM1 12.500h12" fill="none" stroke="#bdbdbd" stroke-width="1.100"/></svg>
<div class="abs" style="left:933.5px;top:168.0px;font-size:10.5px;line-height:16px;color:#bdbdbd;white-space:nowrap;">填充<span style="font-size:7px"> ▾</span></div>
<svg class="abs" style="left:862px;top:192px" width="15" height="14" viewBox="0 0 15 14"><path d="M7.500 1 14 4 7.500 7 1 4zM1 7l6.500 3L14 7M1 10l6.500 3L14 10" fill="none" stroke="#7a7a7a" stroke-width="1.100"/></svg>
<div class="abs" style="left:880.0px;top:191.0px;font-size:10.5px;line-height:16px;color:#505050;white-space:nowrap;">排列<span style="font-size:7px;color:#777;vertical-align:1.500px"> ▾</span></div>
<svg class="abs" style="left:916px;top:192px" width="13" height="13" viewBox="0 0 13 13"><rect x="0.600" y="0.600" width="11.800" height="11.800" fill="none" stroke="#bdbdbd" stroke-width="1.100"/><rect x="2.800" y="2.800" width="7.400" height="7.400" fill="none" stroke="#bdbdbd" stroke-width=".8"/></svg>
<div class="abs" style="left:933.5px;top:191.0px;font-size:10.5px;line-height:16px;color:#bdbdbd;white-space:nowrap;">轮廓<span style="font-size:7px"> ▾</span></div>
<svg class="abs" style="left:960px;top:207px" width="5" height="5" viewBox="0 0 5 5"><path d="M4.500 0v4.500H0" fill="none" stroke="#bdbdbd"/></svg>
<svg class="abs" style="left:988px;top:167px" width="20" height="23" viewBox="0 0 20 23"><path d="M1 1h10l5 5v5M16 22H1V1M11 1v5h5" fill="none" stroke="#7a7a7a" stroke-width="1.300"/><path d="M12 10c0 2 1 3 2 3.500V21h3v-7.500c1-.500 2-1.500 2-3.500" fill="#fff" stroke="#e0703a" stroke-width="1.200"/></svg>
<div class="abs" style="left:962.5px;width:70px;text-align:center;top:192.0px;font-size:10.5px;line-height:16px;color:#505050;white-space:nowrap;">文档助手</div>
<svg class="abs" style="left:1042px;top:167px" width="23" height="23" viewBox="0 0 23 23"><g fill="none" stroke="#7a7a7a" stroke-width="1.300"><path d="M1 1.500h20M2.500 1.500v12h17v-12M11 13.500v5M6 19.500h10"/></g><path d="M15 6c0 2 1 2.500 1.500 3v8h2.500V9c.500-.500 1.500-1 1.500-3" fill="#fff" stroke="#e0703a" stroke-width="1.100"/></svg>
<div class="abs" style="left:1016.0px;width:70px;text-align:center;top:192.0px;font-size:10.5px;line-height:16px;color:#505050;white-space:nowrap;">演示工具<span style="font-size:7px;color:#777;vertical-align:1.500px"> ▾</span></div>
<svg class="abs" style="left:1085px;top:168px" width="15" height="15" viewBox="0 0 15 15"><circle cx="6" cy="6" r="4.800" fill="none" stroke="#e0703a" stroke-width="1.200"/><path d="M9.500 9.500l4 4" stroke="#e0703a" stroke-width="2"/></svg>
<div class="abs" style="left:1103.0px;top:168.0px;font-size:10.5px;line-height:16px;color:#505050;white-space:nowrap;">查找</div>
<svg class="abs" style="left:1085px;top:192px" width="16" height="14" viewBox="0 0 16 14"><text x="0" y="6" font-size="6.500" font-family="Liberation Sans,sans-serif" fill="#7a7a7a">AB</text><text x="0" y="13" font-size="6.500" font-family="Liberation Sans,sans-serif" fill="#e0703a">AC</text><path d="M12 2c3 1 3 7 0 8.500M13.500 12 11.500 10.500 13.500 8.500" fill="none" stroke="#7a7a7a" stroke-width="1"/></svg>
<div class="abs" style="left:1103.0px;top:191.0px;font-size:10.5px;line-height:16px;color:#505050;white-space:nowrap;">替换<span style="font-size:7px;color:#777;vertical-align:1.500px"> ▾</span></div>
<svg class="abs" style="left:1157px;top:168px" width="23" height="22" viewBox="0 0 23 22"><g fill="none" stroke="#7a7a7a" stroke-width="1.300"><rect x="1" y="1" width="19" height="15" rx="1"/><path d="M6 1v15"/></g><path d="M12 7l8.500 5.500-4 .8 2 4.200-1.800.8-2-4.300-2.700 2.700z" fill="#fff" stroke="#e0703a" stroke-width="1.100" stroke-linejoin="round"/></svg>
<div class="abs" style="left:1133.0px;width:70px;text-align:center;top:192.0px;font-size:10.5px;line-height:16px;color:#505050;white-space:nowrap;">选择窗格</div>
<div class="abs" style="left:93px;top:217px;width:134px;height:576px;background:#e5e5e5;"></div>
<div class="abs" style="left:227px;top:217px;width:1px;height:576px;background:#dadada;"></div>
<div class="abs" style="left:228px;top:217px;width:16px;height:576px;background:#e9e9e9;"></div>
<div class="abs" style="left:103.5px;top:228.5px;width:51px;height:18px;background:#acacac;border-radius:9px"></div>
<div class="abs" style="left:103.5px;width:51px;text-align:center;top:229.5px;font-size:10.5px;line-height:16px;color:#fff;white-space:nowrap;">幻灯片</div>
<div class="abs" style="left:217px;top:253px;width:6px;height:78px;background:#a3a3a3;border-radius:3px"></div>
<div class="abs" style="left:80px;top:257px;width:132.5px;height:112px;background:#fbfbfb;border:2px solid #e0703a;border-radius:4px"></div>
<svg class="abs" style="left:93px;top:259px;overflow:hidden" width="114.800" height="108" viewBox="93 259 114.800 108"><g transform="translate(-41.81 212.67) scale(0.1935 0.198)"><use href="#blobB"/><rect x="378.500" y="250" width="889.500" height="494" fill="none" stroke="#9fb6ae" stroke-width="4"/><use href="#blobP"/><use href="#blobD"/><rect x="657" y="547" width="324" height="35.500" fill="#85a296"/></g></svg>
<div class="abs" style="left:90.5px;width:14px;text-align:center;top:299.5px;font-size:9.5px;line-height:16px;color:#222;white-space:nowrap;font-weight:500">的</div>
<div class="abs" style="left:107.0px;width:14px;text-align:center;top:299.5px;font-size:9.5px;line-height:16px;color:#222;white-space:nowrap;font-weight:500">岩</div>
<div class="abs" style="left:126.0px;width:14px;text-align:center;top:299.5px;font-size:9.5px;line-height:16px;color:#222;white-space:nowrap;font-weight:500">石</div>
<div class="abs" style="left:144.5px;width:14px;text-align:center;top:299.5px;font-size:9.5px;line-height:16px;color:#222;white-space:nowrap;font-weight:500">世</div>
<div class="abs" style="left:163.5px;width:14px;text-align:center;top:299.5px;font-size:9.5px;line-height:16px;color:#222;white-space:nowrap;font-weight:500">界</div>
<div class="abs" style="left:80px;top:383px;width:130px;height:108px;background:#fbfbfb;border:1px solid #dcdcdc"></div>
<svg class="abs" style="left:99px;top:406px" width="4" height="7" viewBox="0 0 4 7"><path d="M0.500 6.500 3 0.500" stroke="#999" stroke-width=".7"/></svg>
<div class="abs" style="left:105.5px;top:401.0px;font-size:5.5px;line-height:16px;color:#111;white-space:nowrap;font-weight:900;font-style:italic;letter-spacing:-.3px">选题介绍</div>
<svg class="abs" style="left:99px;top:419px" width="4" height="7" viewBox="0 0 4 7"><path d="M0.500 6.500 3 0.500" stroke="#999" stroke-width=".7"/></svg>
<div class="abs" style="left:105.5px;top:414.0px;font-size:5.5px;line-height:16px;color:#111;white-space:nowrap;font-weight:900;font-style:italic;letter-spacing:-.3px">市场调研</div>
<svg class="abs" style="left:99px;top:431px" width="4" height="7" viewBox="0 0 4 7"><path d="M0.500 6.500 3 0.500" stroke="#999" stroke-width=".7"/></svg>
<div class="abs" style="left:105.5px;top:426.0px;font-size:5.5px;line-height:16px;color:#111;white-space:nowrap;font-weight:900;font-style:italic;letter-spacing:-.3px">活动开展及分析</div>
<svg class="abs" style="left:99px;top:445px" width="4" height="7" viewBox="0 0 4 7"><path d="M0.500 6.500 3 0.500" stroke="#999" stroke-width=".7"/></svg>
<div class="abs" style="left:105.5px;top:440.0px;font-size:5.5px;line-height:16px;color:#111;white-space:nowrap;font-weight:900;font-style:italic;letter-spacing:-.3px">技术方案论证</div>
<svg class="abs" style="left:99px;top:459.5px" width="4" height="7" viewBox="0 0 4 7"><path d="M0.500 6.500 3 0.500" stroke="#999" stroke-width=".7"/></svg>
<div class="abs" style="left:105.5px;top:454.5px;font-size:5.5px;line-height:16px;color:#111;white-space:nowrap;font-weight:900;font-style:italic;letter-spacing:-.3px">选题总结</div>
<div class="abs" style="left:80px;top:507px;width:130px;height:108px;background:#fbfbfb;border:1px solid #dcdcdc"></div>
<svg class="abs" style="left:93px;top:508px;overflow:hidden" width="114.800" height="106" viewBox="93 508 114.800 106"><g transform="translate(-41.81 461.97) scale(0.1935 0.198)"><use href="#blobB"/><rect x="378.500" y="250" width="889.500" height="494" fill="none" stroke="#9fb6ae" stroke-width="4"/><use href="#blobP"/><use href="#blobD"/><rect x="657" y="420" width="324" height="30" fill="#85a296"/></g></svg>
<div class="abs" style="left:91.0px;width:14px;text-align:center;top:554.0px;font-size:9.5px;line-height:16px;color:#333;white-space:nowrap;">题</div>
<div class="abs" style="left:126.0px;width:14px;text-align:center;top:554.0px;font-size:9.5px;line-height:16px;color:#333;white-space:nowrap;">介</div>
<div class="abs" style="left:162.5px;width:14px;text-align:center;top:554.0px;font-size:9.5px;line-height:16px;color:#333;white-space:nowrap;">绍</div>
<div class="abs" style="left:80px;top:631px;width:130px;height:109px;background:#fbfbfb;border:1px solid #dcdcdc"></div>
<svg class="abs" style="left:93px;top:665px" width="32" height="50" viewBox="0 0 32 50"><rect x="-5" y="8" width="22" height="41" fill="none" stroke="#c9c9c9" stroke-width=".8"/><rect x="-4" y="1" width="12" height="9" rx="4" fill="#fbfbfb" stroke="#a9c0b8" stroke-width=".8"/><path d="M0 24h6" stroke="#222" stroke-width="1.600"/><path d="M0 31h5M0 36h5" stroke="#888" stroke-width=".8"/></svg>
<svg class="abs" style="left:119px;top:665px" width="32" height="50" viewBox="0 0 32 50"><rect x="0.5" y="8" width="30" height="41" fill="none" stroke="#c9c9c9" stroke-width=".8"/><rect x="9" y="1" width="12" height="9" rx="1" fill="#fbfbfb" stroke="#a9c0b8" stroke-width=".8"/><path d="M7 24h16" stroke="#222" stroke-width="1.600"/><path d="M10 31h10M10 36h10" stroke="#888" stroke-width=".8"/></svg>
<svg class="abs" style="left:158px;top:665px" width="32" height="50" viewBox="0 0 32 50"><rect x="0.5" y="8" width="30" height="41" fill="none" stroke="#c9c9c9" stroke-width=".8"/><rect x="9" y="1" width="12" height="9" rx="1" fill="#fbfbfb" stroke="#a9c0b8" stroke-width=".8"/><path d="M7 24h16" stroke="#222" stroke-width="1.600"/><path d="M10 31h10M10 36h10" stroke="#888" stroke-width=".8"/></svg>
<div class="abs" style="left:80px;top:756px;width:130px;height:34px;background:#fbfbfb;border:1px solid #dcdcdc;border-bottom:none"></div>
<div class="abs" style="left:93px;top:786px;width:15px;height:3px;background:#1f5fbf;"></div>
<div class="abs" style="left:93px;top:791px;width:134px;height:27px;background:#e8e8e8;"></div>
<svg class="abs" style="left:101px;top:796px" width="14" height="14" viewBox="0 0 14 14"><path d="M7 0.500v13M0.500 7h13" stroke="#555" stroke-width="1.300"/></svg>
<div class="abs" style="left:345px;top:235px;width:945px;height:531.5px;background:#fbfbfb;box-shadow:0 1px 5px rgba(0,0,0,.28)"></div>
<svg class="abs" style="left:227px;top:217px;overflow:hidden" width="1113" height="562" viewBox="227 217 1113 562"><path id="blobB" fill="#dff0ea" d="M461.0 535.5C472.0 533.5 483.0 536.4 494.0 541.0C505.0 545.6 517.2 555.5 527.0 563.0C536.8 570.5 546.5 579.0 553.0 586.0C559.5 593.0 564.3 594.7 566.0 605.0C567.7 615.3 564.3 635.8 563.0 648.0C561.7 660.2 556.3 668.0 558.0 678.0C559.7 688.0 568.3 699.8 573.0 708.0C577.7 716.2 584.3 720.0 586.0 727.0C587.7 734.0 585.2 742.2 583.0 750.0C580.8 757.8 575.8 767.3 573.0 774.0C570.2 780.7 571.5 785.7 566.0 790.0C560.5 794.3 561.0 798.0 540.0 800.0C519.0 802.0 473.3 802.0 440.0 802.0C406.7 802.0 360.3 803.0 340.0 800.0C319.7 797.0 324.3 791.7 318.0 784.0C311.7 776.3 308.5 765.7 302.0 754.0C295.5 742.3 286.7 727.8 279.0 714.0C271.3 700.2 261.7 683.7 256.0 671.0C250.3 658.3 246.6 646.2 245.0 638.0C243.4 629.8 242.3 628.5 246.5 622.0C250.7 615.5 259.1 607.2 270.0 599.0C280.9 590.8 296.7 579.2 312.0 572.5C327.3 565.8 344.8 561.2 362.0 559.0C379.2 556.8 404.0 560.0 415.0 559.0C426.0 558.0 420.3 556.9 428.0 553.0C435.7 549.1 450.0 537.5 461.0 535.5z"/><rect x="378.500" y="250" width="889.500" height="494" fill="none" stroke="#a3b8b0" stroke-width="1"/><path id="blobP" fill="#dff0ea" d="M1031.0 212.0C1060.5 210.0 1103.3 211.7 1140.0 212.0C1176.7 212.3 1227.8 212.0 1251.0 214.0C1274.2 216.0 1271.0 220.2 1279.0 224.0C1287.0 227.8 1294.0 231.5 1299.0 237.0C1304.0 242.5 1306.8 249.0 1309.0 257.0C1311.2 265.0 1311.7 273.3 1312.0 285.0C1312.3 296.7 1312.0 312.8 1311.0 327.0C1310.0 341.2 1308.0 353.5 1306.0 370.0C1304.0 386.5 1301.2 411.0 1299.0 426.0C1296.8 441.0 1301.2 449.3 1293.0 460.0C1284.8 470.7 1265.5 482.5 1250.0 490.0C1234.5 497.5 1213.7 500.8 1200.0 505.0C1186.3 509.2 1176.0 511.2 1168.0 515.0C1160.0 518.8 1157.0 523.8 1152.0 528.0C1147.0 532.2 1143.0 536.7 1138.0 540.5C1133.0 544.3 1127.7 548.2 1122.0 551.0C1116.3 553.8 1112.7 556.4 1104.0 557.5C1095.3 558.6 1082.7 559.2 1070.0 557.5C1057.3 555.8 1041.3 551.9 1028.0 547.0C1014.7 542.1 1000.0 534.7 990.0 528.0C980.0 521.3 972.8 514.0 968.0 507.0C963.2 500.0 962.5 496.2 961.0 486.0C959.5 475.8 961.0 456.0 959.0 446.0C957.0 436.0 953.5 433.2 949.0 426.0C944.5 418.8 937.7 411.5 932.0 403.0C926.3 394.5 919.7 383.5 915.0 375.0C910.3 366.5 907.3 360.0 904.0 352.0C900.7 344.0 896.6 335.8 895.0 327.0C893.4 318.2 894.0 308.3 894.5 299.0C895.0 289.7 896.2 280.5 898.0 271.0C899.8 261.5 901.2 248.7 905.0 242.0C908.8 235.3 911.3 234.0 921.0 231.0C930.7 228.0 944.7 227.2 963.0 224.0C981.3 220.8 1001.5 214.0 1031.0 212.0z"/><path id="blobD" fill="#85a296" d="M1146.0 460.0C1146.5 455.7 1146.7 451.8 1150.0 448.0C1153.3 444.2 1158.8 440.2 1166.0 437.0C1173.2 433.8 1185.2 430.5 1193.0 429.0C1200.8 427.5 1207.5 426.7 1213.0 428.0C1218.5 429.3 1220.7 433.3 1226.0 437.0C1231.3 440.7 1236.3 445.8 1245.0 450.0C1253.7 454.2 1266.7 458.7 1278.0 462.0C1289.3 465.3 1306.8 465.3 1313.0 470.0C1319.2 474.7 1314.2 481.2 1315.0 490.0C1315.8 498.8 1317.2 513.2 1318.0 523.0C1318.8 532.8 1319.7 536.7 1320.0 549.0C1320.3 561.3 1320.3 585.8 1320.0 597.0C1319.7 608.2 1319.2 611.2 1318.0 616.5C1316.8 621.8 1315.1 625.9 1312.5 629.0C1309.9 632.1 1306.1 634.7 1302.5 635.0C1298.9 635.3 1294.8 632.5 1291.0 630.6C1287.2 628.7 1284.0 626.2 1280.0 623.6C1276.0 621.0 1271.2 618.1 1267.0 615.0C1262.8 611.9 1259.9 609.5 1254.5 605.0C1249.1 600.5 1240.8 593.7 1234.7 588.0C1228.6 582.3 1222.6 576.3 1217.8 571.0C1213.0 565.7 1212.3 564.5 1206.0 556.0C1199.7 547.5 1187.2 529.3 1180.0 520.0C1172.8 510.7 1167.0 505.0 1163.0 500.0C1159.0 495.0 1158.7 494.3 1156.0 490.0C1153.3 485.7 1148.7 479.0 1147.0 474.0C1145.3 469.0 1145.5 464.3 1146.0 460.0z"/></svg>
<div class="abs" style="left:513px;top:448px;width:60px;text-align:center;font-family:'Liberation Serif','Noto Serif CJK SC',serif;font-size:45px;line-height:60px;color:#111;font-weight:400">移</div>
<div class="abs" style="left:604.7px;top:448px;width:60px;text-align:center;font-family:'Liberation Serif','Noto Serif CJK SC',serif;font-size:45px;line-height:60px;color:#111;font-weight:400">动</div>
<div class="abs" style="left:696.3px;top:448px;width:60px;text-align:center;font-family:'Liberation Serif','Noto Serif CJK SC',serif;font-size:45px;line-height:60px;color:#111;font-weight:400">的</div>
<div class="abs" style="left:788px;top:448px;width:60px;text-align:center;font-family:'Liberation Serif','Noto Serif CJK SC',serif;font-size:45px;line-height:60px;color:#111;font-weight:400">岩</div>
<div class="abs" style="left:879.7px;top:448px;width:60px;text-align:center;font-family:'Liberation Serif','Noto Serif CJK SC',serif;font-size:45px;line-height:60px;color:#111;font-weight:400">石</div>
<div class="abs" style="left:971.4px;top:448px;width:60px;text-align:center;font-family:'Liberation Serif','Noto Serif CJK SC',serif;font-size:45px;line-height:60px;color:#111;font-weight:400">世</div>
<div class="abs" style="left:1063px;top:448px;width:60px;text-align:center;font-family:'Liberation Serif','Noto Serif CJK SC',serif;font-size:45px;line-height:60px;color:#111;font-weight:400">界</div>
<div class="abs" style="left:657px;top:547px;width:324px;height:35.5px;background:#85a296;"></div>
<div class="abs" style="left:661px;top:549.500px;width:30px;text-align:center;font-family:'Liberation Serif','Noto Serif CJK SC',serif;font-size:22.500px;line-height:30px;color:#fff;font-weight:600">曲</div>
<div class="abs" style="left:694.5px;top:549.500px;width:30px;text-align:center;font-family:'Liberation Serif','Noto Serif CJK SC',serif;font-size:22.500px;line-height:30px;color:#fff;font-weight:600">桁</div>
<div class="abs" style="left:729px;top:549.500px;width:30px;text-align:center;font-family:'Liberation Serif','Noto Serif CJK SC',serif;font-size:22.500px;line-height:30px;color:#fff;font-weight:600">净</div>
<div class="abs" style="left:786px;top:549.500px;width:30px;text-align:center;font-family:'Liberation Serif','Noto Serif CJK SC',serif;font-size:22.500px;line-height:30px;color:#fff;font-weight:600">赵</div>
<div class="abs" style="left:821.5px;top:549.500px;width:30px;text-align:center;font-family:'Liberation Serif','Noto Serif CJK SC',serif;font-size:22.500px;line-height:30px;color:#fff;font-weight:600">瑜</div>
<div class="abs" style="left:878.5px;top:549.500px;width:30px;text-align:center;font-family:'Liberation Serif','Noto Serif CJK SC',serif;font-size:22.500px;line-height:30px;color:#fff;font-weight:600">陈</div>
<div class="abs" style="left:913px;top:549.500px;width:30px;text-align:center;font-family:'Liberation Serif','Noto Serif CJK SC',serif;font-size:22.500px;line-height:30px;color:#fff;font-weight:600">俊</div>
<div class="abs" style="left:947px;top:549.500px;width:30px;text-align:center;font-family:'Liberation Serif','Noto Serif CJK SC',serif;font-size:22.500px;line-height:30px;color:#fff;font-weight:600">凯</div>
<svg class="abs" style="left:323px;top:389px" width="12" height="18" viewBox="0 0 12 18"><path d="M1 1v13l3.200-3 2.400 5.500 2-.9-2.400-5.300H10.500z" fill="#fff" stroke="#222" stroke-width="1"/></svg>
<div class="abs" style="left:1323px;top:217px;width:13px;height:562px;background:#dcdcdc;"></div>
<svg class="abs" style="left:1326px;top:227px" width="8" height="5" viewBox="0 0 8 5"><path d="M4 0.500 7.500 4.500h-7z" fill="#777"/></svg>
<div class="abs" style="left:1323.5px;top:239px;width:12px;height:37px;background:#f3f3f3;border-radius:6px;border:1px solid #cfcfcf"></div>
<svg class="abs" style="left:1326px;top:735px" width="8" height="5" viewBox="0 0 8 5"><path d="M0.500 0.500h7L4 4.500z" fill="#777"/></svg>
<svg class="abs" style="left:1326px;top:749px" width="8" height="9" viewBox="0 0 8 9"><path d="M4 0.500 7 3.500H1zM4 4.500 7 7.500H1z" fill="#777"/></svg>
<svg class="abs" style="left:1326px;top:766px" width="8" height="9" viewBox="0 0 8 9"><path d="M1 0.500h6L4 3.500zM1 4.500h6L4 7.500z" fill="#777"/></svg>
<div class="abs" style="left:228px;top:779px;width:1094px;height:14px;background:#e2e2e2;"></div>
<svg class="abs" style="left:233px;top:783px" width="5" height="7" viewBox="0 0 5 7"><path d="M4.500 0.500v6L0.500 3.500z" fill="#666"/></svg>
<svg class="abs" style="left:1312px;top:783px" width="5" height="7" viewBox="0 0 5 7"><path d="M0.500 0.500v6L4.500 3.500z" fill="#666"/></svg>
<div class="abs" style="left:245px;top:780.5px;width:1015px;height:11.5px;background:#fbfbfb;border-radius:6px;border:1px solid #d4d4d4"></div>
<div class="abs" style="left:1338px;top:217px;width:32px;height:601px;background:#e7e7e7;"></div>
<div class="abs" style="left:1349px;top:228px;width:14px;height:1px;background:#d0d0d0;"></div>
<div class="abs" style="left:1349px;top:231px;width:14px;height:1px;background:#d0d0d0;"></div>
<svg class="abs" style="left:1349px;top:250px" width="15" height="14" viewBox="0 0 15 14"><g fill="none" stroke="#7a7a7a" stroke-width="1.100"><path d="M0 2.500h10M0 7h3.500M7 7h8M0 11.500h6.500M10 11.500h5"/><circle cx="12" cy="2.500" r="1.700"/><circle cx="5.200" cy="7" r="1.700"/><circle cx="8.200" cy="11.500" r="1.700"/></g></svg>
<svg class="abs" style="left:1349px;top:282px" width="15" height="16" viewBox="0 0 15 16"><path d="M8.500 1 10.300 5 14.500 5.500 11.300 8.300 12.300 12.500 8.500 10.300 5 12.500 5.800 8.300 2.800 5.500 6.800 5z" fill="none" stroke="#7a7a7a" stroke-width="1.100"/><path d="M3.500 13 2 15.500M6.500 13.500 5 16M9.500 13.500 8 16" stroke="#7a7a7a" stroke-width=".9"/></svg>
<svg class="abs" style="left:1349px;top:315px" width="15" height="15" viewBox="0 0 15 15"><g fill="none" stroke="#7a7a7a" stroke-width="1.100"><path d="M3 7V2.500a1 1 0 0 1 1-1h6a1 1 0 0 1 1 1V5"/><rect x="7" y="6.500" width="7.500" height="7" rx="1"/><path d="M0.500 9.500h5M3.500 7.500l2 2-2 2"/></g></svg>
<svg class="abs" style="left:1350px;top:796px" width="13" height="13" viewBox="0 0 13 13"><g fill="none" stroke="#7a7a7a" stroke-width="1.200"><rect x="0.700" y="0.700" width="4.600" height="4.600" rx="1"/><rect x="7.700" y="0.700" width="4.600" height="4.600" rx="1"/><rect x="0.700" y="7.700" width="4.600" height="4.600" rx="1"/><rect x="7.700" y="7.700" width="4.600" height="4.600" rx="1"/></g></svg>
<div class="abs" style="left:227px;top:793px;width:1111px;height:25px;background:#e6e6e6;"></div>
<svg class="abs" style="left:233px;top:798px" width="14" height="13" viewBox="0 0 14 13"><path d="M1.500 1h11a1 1 0 0 1 1 1v7a1 1 0 0 1-1 1H5l-3.500 2.500V2a1 1 0 0 1 1-1z" fill="none" stroke="#666" stroke-width="1.100"/><path d="M4 4h7M4 6.800h7" stroke="#666" stroke-width="1"/></svg>
<div class="abs" style="left:253.0px;top:797.0px;font-size:12px;line-height:16px;color:#555;white-space:nowrap;">单击此处添加备注</div>
<div class="abs" style="left:93px;top:818px;width:1277px;height:26px;background:#f2f2f2;"></div>
<div class="abs" style="left:93.0px;top:825.0px;font-size:10.5px;line-height:16px;color:#666;white-space:nowrap;">ffice 主题</div>
<div class="abs" style="left:147px;top:823px;width:1px;height:20px;background:#e2e2e2;"></div>
<div class="abs" style="left:226px;top:823px;width:1px;height:20px;background:#e2e2e2;"></div>
<svg class="abs" style="left:158px;top:827px" width="13" height="12" viewBox="0 0 13 12"><path d="M1 2.500V1h8v1.500M5 1v10M3.500 11h3" fill="none" stroke="#555" stroke-width="1.100"/><text x="8" y="11.500" font-size="7" font-family="Liberation Sans,sans-serif" fill="#555">?</text></svg>
<div class="abs" style="left:175.0px;top:825.0px;font-size:10.5px;line-height:16px;color:#666;white-space:nowrap;">缺失字体</div>
<svg class="abs" style="left:977px;top:828px" width="14" height="11" viewBox="0 0 14 11"><path d="M0 1h13M0 4h13M0 7h9" stroke="#777" stroke-width="1.200"/><path d="M9 8.500h5L11.500 11z" fill="#555"/></svg>
<svg class="abs" style="left:994px;top:832px" width="5" height="3" viewBox="0 0 5 3"><path d="M0 0h5L2.500 3z" fill="#888"/></svg>
<div class="abs" style="left:1003px;top:822px;width:21px;height:21px;background:#d0d0d0;border-radius:2px"></div>
<svg class="abs" style="left:1007px;top:826px" width="14" height="13" viewBox="0 0 14 13"><rect x="0.700" y="0.700" width="12.600" height="11.600" fill="none" stroke="#555" stroke-width="1.300"/><path d="M4 1v11M4 9.500h9" stroke="#555" stroke-width="1.200"/></svg>
<svg class="abs" style="left:1030px;top:826px" width="14" height="13" viewBox="0 0 14 13"><g fill="none" stroke="#666" stroke-width="1.200"><rect x="0.700" y="0.700" width="5" height="4.600" rx="1"/><rect x="8.300" y="0.700" width="5" height="4.600" rx="1"/><rect x="0.700" y="7.700" width="5" height="4.600" rx="1"/><rect x="8.300" y="7.700" width="5" height="4.600" rx="1"/></g></svg>
<svg class="abs" style="left:1052px;top:826px" width="15" height="13" viewBox="0 0 15 13"><path d="M7.500 2.500C6 1 3 .8 1 1.500v10c2-.700 5-.500 6.500 1 1.500-1.500 4.500-1.700 6.500-1v-10c-2-.700-5-.500-6.500 1zM7.500 2.500v10" fill="none" stroke="#666" stroke-width="1.200"/></svg>
<div class="abs" style="left:1082px;top:822px;width:28px;height:21px;background:#f07048;border-radius:3px"></div>
<svg class="abs" style="left:1092px;top:827px" width="10" height="11" viewBox="0 0 10 11"><path d="M1 0.500v10L9.500 5.500z" fill="#fff"/></svg>
<svg class="abs" style="left:1114px;top:832px" width="5" height="3" viewBox="0 0 5 3"><path d="M0 0h5L2.500 3z" fill="#888"/></svg>
<div class="abs" style="left:1133.0px;top:825.0px;font-size:10.5px;line-height:16px;color:#777;white-space:nowrap;">81%</div>
<svg class="abs" style="left:1159px;top:832px" width="5" height="3" viewBox="0 0 5 3"><path d="M0 0h5L2.500 3z" fill="#888"/></svg>
<div class="abs" style="left:1174px;top:832.5px;width:10px;height:1.5px;background:#555;"></div>
<div class="abs" style="left:1194px;top:833px;width:124px;height:1px;background:#c9c9c9;"></div>
<div class="abs" style="left:1255px;top:831px;width:1px;height:5px;background:#c9c9c9;"></div>
<div class="abs" style="left:1236.5px;top:827.5px;width:11px;height:11px;background:#f7f7f7;border-radius:50%;border:1.300px solid #666"></div>
<svg class="abs" style="left:1328px;top:827px" width="11" height="11" viewBox="0 0 11 11"><path d="M5.500 0v11M0 5.500h11" stroke="#444" stroke-width="1.400"/></svg>
<svg class="abs" style="left:1351px;top:827px" width="12" height="12" viewBox="0 0 12 12"><path d="M0.600 3.500V.600h3M8.500.600h3v3M11.400 8.500v3h-3M3.500 11.400h-3v-3" fill="none" stroke="#666" stroke-width="1.200"/><circle cx="6" cy="6" r="1.500" fill="none" stroke="#666"/></svg>
<div class="abs" style="left:1330px;top:410px;width:40px;height:128px;background:#77787b;"></div>
<svg class="abs" style="left:1338px;top:455px" width="24" height="38" viewBox="0 0 24 38"><path d="M3 2 20.500 19 3 36" fill="none" stroke="#e9e9e9" stroke-width="2.200"/></svg>
<!--WPS-END-->
</div></div>

<!-- ================= RIGHT PANEL ================= -->
<div id="panel" class="abs">
  <!-- top buttons -->
  <div class="abs pbtn" style="left:20px">
    <svg class="abs" style="left:50px;top:22px" width="36" height="34" viewBox="0 0 36 34"><g stroke="#b4b5b7" fill="none" stroke-linecap="round"><path d="M3.500 3.700h29M3.500 16.300h29M3.500 28.700h29" stroke-width="3.200"/><path d="M24.300 1.200v5M8.500 13.800v5M24.300 26.200v5" stroke-width="3.600"/></g></svg>
    <div class="abs l">主持人管理</div>
  </div>
  <div class="abs pbtn" style="left:176px">
    <svg class="abs" style="left:51px;top:22px" width="34" height="34" viewBox="0 0 34 34"><g stroke="#b4b5b7" stroke-width="3" fill="none" stroke-linecap="round" stroke-linejoin="round"><path d="M14.500 6.500H6a3 3 0 0 0-3 3V27a3 3 0 0 0 3 3h19a3 3 0 0 0 3-3V19"/><path d="M17.500 16.500 31 3M21.500 2.500H31.500V12.500"/></g></svg>
    <div class="abs l">入会口令</div>
  </div>
  <div class="abs pbtn" style="left:330px">
    <svg class="abs" style="left:49px;top:22px" width="38" height="34" viewBox="0 0 38 34"><g stroke="#b4b5b7" stroke-width="3" fill="none" stroke-linecap="round"><circle cx="14.600" cy="8.800" r="6.300"/><ellipse cx="14.600" cy="24.600" rx="12.300" ry="4.800"/><path d="M23.800 13h11.400M29.500 7.300v11.400"/></g></svg>
    <div class="abs l">添加参会人</div>
  </div>
  <div class="abs" style="left:0;top:159px;width:484px;height:1px;background:#383b40"></div>
  <!-- search -->
  <div class="abs" style="left:24px;top:162px;width:448px;height:56px;border-radius:28px;border:2px solid #3f4246;background:#25282d"></div>
  <svg class="abs" style="left:46px;top:176px" width="30" height="30" viewBox="0 0 30 30"><circle cx="12.500" cy="12.500" r="10.500" fill="none" stroke="#77797c" stroke-width="2.500"/><path d="M20 20.500l6.500 6.500" stroke="#77797c" stroke-width="2.800" stroke-linecap="round"/></svg>
  <div class="abs" style="left:86px;top:178px;font-size:18px;line-height:28px;color:#98999b;white-space:nowrap">搜索已入会成员</div>
  <svg class="abs" style="left:437px;top:179px" width="22" height="22" viewBox="0 0 22 22"><circle cx="11" cy="11" r="10.500" fill="#5a5c60"/><path d="M7 7l8 8M15 7l-8 8" stroke="#25282d" stroke-width="2.600"/></svg>
  <!-- tabs -->
  <div class="abs" style="left:0;top:236px;width:242px;text-align:center;font-size:24px;line-height:40px;color:#fff">已入会(8)</div>
  <div class="abs" style="left:242px;top:238px;width:242px;text-align:center;font-size:24px;line-height:40px;color:#999a9c">未入会(6)</div>
  <div class="abs" style="left:0;top:290px;width:484px;height:2px;background:#383b40"></div>
  <div class="abs" style="left:0;top:289px;width:242px;height:3px;background:#1a8bf5"></div>
  <!-- list -->
  <div class="abs" style="left:0;top:316px;width:484px;height:544px;overflow:hidden">
    <!-- me -->
    <div class="abs" style="left:0;top:0;width:468px;height:120px;background:#3d3f44"></div>
    <div class="abs" style="left:0;top:0;width:468px;height:2px;background:repeating-linear-gradient(90deg,#000 0 2px,transparent 2px 4px)"></div>
    <div class="abs" style="left:0;top:118px;width:468px;height:2px;background:repeating-linear-gradient(90deg,#000 0 2px,transparent 2px 4px)"></div>
    <div class="abs" style="left:0;top:0;width:2px;height:120px;background:repeating-linear-gradient(180deg,#000 0 2px,transparent 2px 4px)"></div>
    <div class="abs" style="left:466px;top:0;width:2px;height:120px;background:repeating-linear-gradient(180deg,#000 0 2px,transparent 2px 4px)"></div>
    <div class="abs" style="left:24px;top:22px;width:76px;height:76px;border-radius:50%;background:#0089ff;color:#fff;font-size:28px;line-height:80px;text-align:center;font-weight:400">我</div>
    <div class="abs" style="left:116px;top:25px;font-size:28px;line-height:40px;color:#dfe0e1">我</div>
    <div class="abs" style="left:116px;top:63px;font-size:24px;line-height:36px;color:#76787b">主持人</div>
    <div class="abs dots" style="left:415px;top:55px"><i></i><i></i><i></i></div>
    <!-- zhao yu -->
    <div class="abs" style="left:24px;top:142px;width:76px;height:76px;border-radius:50%;background:#05b853"></div>
    <svg class="abs" style="left:28px;top:146px" width="68" height="68" viewBox="0 0 68 68"><defs><clipPath id="ca"><circle cx="34" cy="34" r="34"/></clipPath><filter id="fb" x="-10%" y="-10%" width="120%" height="120%"><feGaussianBlur stdDeviation=".9"/></filter></defs><g clip-path="url(#ca)"><rect width="68" height="68" fill="#fefefe"/><g filter="url(#fb)"><path d="M20.700 4.900 33 0.200 61.200 9.600 66.900 28.400 65.900 52 51.800 63.300 38.600 52 25.400 46.300 23.500 25.600 19.800 17.100z" fill="#f4ebf1"/><path d="M24 8c4-4 12-6 20-4M27 14c2 6 1 14-1 22M36 6c0 8 2 14 6 20M46 8c4 6 8 14 8 24M58 14c4 8 5 20 3 32" fill="none" stroke="#dcc6d6" stroke-width="1.200"/><path d="M28.500 28c4-2 10-2 15 0l-1 6c-4 1.500-9 1.500-13 0z" fill="#f4cfc2"/><path d="M34 35h14v16l-8 3-7-6z" fill="#fffdfd"/><path d="M42.400 30.300 51.800 27.500 54.600 36.900" fill="none" stroke="#a9614a" stroke-width="2"/><path d="M34.800 42.600 38.600 52 43 54" fill="none" stroke="#f0b3a4" stroke-width="2.500"/><path d="M21.700 52 34.800 52.900 36.700 55.700H18.800z" fill="#cfd9d7"/><path d="M18.800 55.700H36.700L39.500 60.500 25.400 64.200 23.500 68 14 64z" fill="#6b3f4a"/><path d="M25.400 64.200 39 61.500 44 68H24z" fill="#c58d8c"/><path d="M49.900 61.400 55.600 60.500 53.700 64.200z" fill="#e56f52"/></g></g></svg>
    <div class="abs" style="left:116px;top:163px;font-size:28px;line-height:40px;color:#dfe0e1">赵瑜</div>
    <svg class="abs" style="left:336px;top:156px" width="40" height="48" viewBox="0 0 40 48"><defs><clipPath id="cm"><rect x="12" y="2" width="16" height="29" rx="8"/></clipPath></defs><rect x="12" y="2" width="16" height="29" rx="8" fill="#84868a"/><rect x="10" y="27" width="20" height="6" fill="#13b955" clip-path="url(#cm)"/><path d="M7 18v5a13 13 0 0 0 26 0V18M20 36v8M14 44.500h12" fill="none" stroke="#84868a" stroke-width="2.200"/></svg>
    <div class="abs dots" style="left:415px;top:175px"><i></i><i></i><i></i></div>
    <!-- software eng -->
    <svg class="abs" style="left:24px;top:262px" width="76" height="76" viewBox="0 0 76 76"><defs><clipPath id="cb"><circle cx="38" cy="38" r="38"/></clipPath></defs><g clip-path="url(#cb)"><rect width="76" height="76" fill="#9c3d30"/><g filter="url(#fb)"><path d="M0 50c6 4 14 7 22 7l-6 19H0z" fill="#a34a2e" opacity=".6"/><rect x="31.500" y="31.500" width="19" height="30" rx="9" fill="#f3c8ae"/><rect x="38" y="41" width="7" height="6" fill="#e3b198"/><path d="M4 56 30 54l6 3 10 12 10 7H6z" fill="#a7a7b0"/><path d="M8 60l8 2 6 6 10-4 8 8" fill="none" stroke="#c6c6ce" stroke-width="2.500"/><path d="M14 66l10 4 8 6" fill="none" stroke="#8d8d98" stroke-width="2.500"/></g></g></svg>
    <svg class="abs" style="left:68px;top:306px" width="32" height="32" viewBox="0 0 32 32"><circle cx="16" cy="16" r="15.500" fill="#1a1f27"/><rect x="12" y="5" width="8" height="16" rx="4" fill="#f4f5f7"/><path d="M9.500 14.500v2.800a6.500 6.500 0 0 0 13 0v-2.800M16 24v3M12.500 27.300h7" fill="none" stroke="#f4f5f7" stroke-width="1.300"/><path d="M7 25 25.500 7.500" stroke="#1a1f27" stroke-width="3.400"/><path d="M6.500 25.500 26 7" stroke="#f4f5f7" stroke-width="1.300"/></svg>
    <div class="abs" style="left:116px;top:282px;font-size:28px;line-height:40px;color:#dfe0e1;white-space:nowrap">软件工程<span style="letter-spacing:.9px">18-...</span></div>
    <svg class="abs" style="left:336px;top:276px" width="40" height="48" viewBox="0 0 40 48"><g opacity="1"><rect x="12.500" y="2" width="15" height="27" rx="7.500" fill="#54565a"/><path d="M7.500 18v4.500a12.500 12.500 0 0 0 25 0V18M20 35v8M13.500 44h13" fill="none" stroke="#54565a" stroke-width="2.200"/><path d="M1.500 40 38.500 5" stroke="#54565a" stroke-width="2.200"/></g></svg><div class="abs dots" style="left:415px;top:295px"><i></i><i></i><i></i></div>
    <!-- tang tianning -->
    <div class="abs" style="left:24px;top:382px;width:76px;height:76px;border-radius:50%;background:#0089ff;color:#fff;font-size:28px;line-height:80px;text-align:center;letter-spacing:-1px;font-weight:400;text-indent:-2px">天宁</div>
    <svg class="abs" style="left:68px;top:426px" width="32" height="32" viewBox="0 0 32 32"><circle cx="16" cy="16" r="15.500" fill="#1a1f27"/><rect x="12" y="5" width="8" height="16" rx="4" fill="#f4f5f7"/><path d="M9.500 14.500v2.800a6.500 6.500 0 0 0 13 0v-2.800M16 24v3M12.500 27.300h7" fill="none" stroke="#f4f5f7" stroke-width="1.300"/><path d="M7 25 25.500 7.500" stroke="#1a1f27" stroke-width="3.400"/><path d="M6.500 25.500 26 7" stroke="#f4f5f7" stroke-width="1.300"/></svg>
    <div class="abs" style="left:116px;top:402px;font-size:28px;line-height:40px;color:#dfe0e1">唐天宁</div>
    <svg class="abs" style="left:336px;top:396px" width="40" height="48" viewBox="0 0 40 48"><g opacity="1"><rect x="12.500" y="2" width="15" height="27" rx="7.500" fill="#54565a"/><path d="M7.500 18v4.500a12.500 12.500 0 0 0 25 0V18M20 35v8M13.500 44h13" fill="none" stroke="#54565a" stroke-width="2.200"/><path d="M1.500 40 38.500 5" stroke="#54565a" stroke-width="2.200"/></g></svg><div class="abs dots" style="left:415px;top:415px"><i></i><i></i><i></i></div>
    <!-- xiao meiling -->
    <svg class="abs" style="left:24px;top:502px" width="76" height="76" viewBox="0 0 76 76"><defs><clipPath id="cc"><circle cx="38" cy="38" r="38"/></clipPath></defs><g clip-path="url(#cc)"><rect width="76" height="76" fill="#c3b2b0"/><g filter="url(#fb)"><path d="M40 2l14 4 8 10-10 2-12-6z" fill="#9a9ba0"/><path d="M27 5h8v7h-8zM46 13h8v5h-8z" fill="#f3eeee"/><path d="M6.500 14.500h7l1 22h-5z" fill="#6d2a30"/><path d="M13 17c6-3 16-3 22 0l1 10H14z" fill="#2f3248"/><path d="M13 27h19l1 16H12z" fill="#dba7b2"/><path d="M20 36h5v7h-5z" fill="#d9727c"/><path d="M1 28h7v6H1zM62 31h10v7H62z" fill="#f6f2f2"/><path d="M43 32c4-4 14-4 18 0l1 12H42z" fill="#37477a"/><path d="M42 36h4v8h-4z" fill="#2a1c2a"/><path d="M2 38h12v6H2z" fill="#7fa38e"/></g></g></svg>
    <div class="abs" style="left:116px;top:522px;font-size:28px;line-height:40px;color:#dfe0e1;white-space:nowrap">肖美玲2017</div>
    <svg class="abs" style="left:336px;top:516px" width="40" height="48" viewBox="0 0 40 48"><g opacity="1"><rect x="12.500" y="2" width="15" height="27" rx="7.500" fill="#54565a"/><path d="M7.500 18v4.500a12.500 12.500 0 0 0 25 0V18M20 35v8M13.500 44h13" fill="none" stroke="#54565a" stroke-width="2.200"/><path d="M1.500 40 38.500 5" stroke="#54565a" stroke-width="2.200"/></g></svg><div class="abs dots" style="left:415px;top:535px"><i></i><i></i><i></i></div>
    <!-- scrollbar -->
    <div class="abs" style="left:468px;top:0;width:16px;height:544px;background:#1d1e1f"></div>
    <div class="abs" style="left:468px;top:0;width:16px;height:272px;border-radius:3px 3px 8px 8px;background:#333435"></div>
  </div>
  <!-- speaking toast -->
  <div class="abs" style="left:226px;top:734px;width:244px;height:84px;border-radius:14px;background:#000"></div>
  <div class="abs" style="left:258px;top:760px;font-size:28px;line-height:40px;color:#fff;white-space:nowrap">赵瑜</div>
  <div class="abs" style="left:330px;top:760px;font-size:28px;line-height:40px;color:#6d6d6d;white-space:nowrap">正在发言</div>
</div>

<!-- ================= BOTTOM BAR ================= -->
<div id="bottombar" class="abs"></div>
<div id="bottomline" class="abs"></div>
<div id="rightline" class="abs"></div>
<!-- pills -->
<div class="abs pill" style="left:164px"></div>
<svg class="abs" style="left:214px;top:948px" width="28" height="40" viewBox="0 0 28 40"><rect x="7" y="1" width="14" height="25" rx="7" fill="#d9dadc"/><path d="M3.300 17v3.500a10.700 10.700 0 0 0 21.400 0V17M14 31.500v6M8.500 38h11" fill="none" stroke="#d9dadc" stroke-width="1.800"/></svg>
<div class="abs plabel" style="left:128px">静音</div>

<div class="abs pill" style="left:340px"></div>
<svg class="abs" style="left:385px;top:955px" width="40" height="26" viewBox="0 0 40 26"><rect x="0" y="0.500" width="27" height="25" rx="3.500" fill="#d9dadc"/><path d="M29 9.500 36.500 3c.8-.6 1.500-.2 1.500.7v18.600c0 .9-.7 1.300-1.500.7L29 16.500z" fill="#d9dadc"/></svg>
<div class="abs plabel" style="left:304px">关闭摄像头</div>

<div class="abs pill" style="left:516px"></div>
<svg class="abs" style="left:563px;top:953px" width="34" height="30" viewBox="0 0 34 30"><path d="M3.500 0.500h27a3 3 0 0 1 3 3V23a3 3 0 0 1-3 3h-1.800L17 16.800 5.300 26H3.500a3 3 0 0 1-3-3V3.500a3 3 0 0 1 3-3z" fill="#d9dadc"/><path d="M17 20.500 25.500 27.500h-17z" fill="#d9dadc"/></svg>
<div class="abs plabel" style="left:480px">共享窗口</div>

<div class="abs pill" style="left:692px;background:#ff5520"></div>
<svg class="abs" style="left:737px;top:959px" width="38" height="18" viewBox="0 0 38 18"><path d="M19 1.500c-6.800 0-12.600 2.200-16.700 6-.9.900-1.100 2-.7 3.200l1.100 3.300c.4 1.100 1.300 1.600 2.500 1.300l5.100-1.300c1.100-.3 1.700-1 1.700-2.100V9.300c2-.8 4.400-1.100 7-1.100s5 .3 7 1.100v2.600c0 1.100.6 1.800 1.700 2.100l5.100 1.300c1.200.3 2.100-.2 2.500-1.300l1.100-3.300c.4-1.200.2-2.300-.7-3.200C31.600 3.700 25.800 1.500 19 1.500z" fill="#fff"/></svg>
<div class="abs plabel" style="left:656px">结束会议</div>

<div class="abs pill" style="left:868px"></div>
<svg class="abs" style="left:914px;top:951px" width="36" height="34" viewBox="0 0 36 34"><path d="M16 1c4.300 0 7.300 3.300 7.300 7.800 0 2.300-.7 4.400-1.900 6-.5.600-.6 1.500-.1 2.200.6.900 1.700 1.300 3.500 1.900v13H1.500c0-5.500 1.500-8.200 5.500-9.700l3.500-1.400c1.300-.6 1.600-1.900.9-3-1.200-1.700-2.200-3.900-2.200-7C9.200 4.300 11.700 1 16 1z" fill="#d9dadc"/><circle cx="25.500" cy="22.500" r="9.500" fill="#44474c"/><path d="M25.500 15v15M18 22.500h15" stroke="#d9dadc" stroke-width="2.800"/></svg>
<div class="abs plabel" style="left:832px">邀请</div>

<div class="abs pill" style="left:1044px"></div>
<svg class="abs" style="left:1089px;top:952px" width="40" height="34" viewBox="0 0 40 34"><path d="M10.500 5c2.700 0 4.600 2.200 4.600 5.100 0 1.500-.4 2.900-1.200 4-.4.500-.4 1 0 1.500.3.500 1 .8 2.100 1.200v8.700H0.500c0-3.600 1-5.400 3.700-6.400l2.300-.9c.9-.4 1.100-1.300.6-2-.8-1.100-1.500-2.600-1.500-4.700C5.600 7.200 7.700 5 10.500 5z" fill="#b5b6b8"/><path d="M21 1c3.800 0 6.400 2.900 6.400 6.900 0 2-.6 3.900-1.700 5.300-.4.500-.5 1.300-.1 1.900.5.800 1.500 1.100 3.100 1.700v10H8c0-4.900 1.300-7.300 4.900-8.600l3.100-1.200c1.100-.5 1.400-1.700.8-2.700-1.100-1.500-1.900-3.400-1.900-6.100C14.900 3.900 17.200 1 21 1z" fill="#d9dadc"/><circle cx="30" cy="23" r="9" fill="#44474c"/><rect x="27" y="14" width="6.500" height="12" rx="3.250" fill="#d9dadc"/><path d="M23.800 21v1.500a6.400 6.400 0 0 0 12.800 0V21M30.200 29v3.500" fill="none" stroke="#d9dadc" stroke-width="1.600"/><path d="M22 13.500 38 32" stroke="#44474c" stroke-width="4"/><path d="M22.500 13 38.500 31.500" stroke="#d9dadc" stroke-width="1.700"/></svg>
<div class="abs plabel" style="left:1008px">全员静音</div>

<div class="abs pill" style="left:1220px"></div>
<svg class="abs" style="left:1266px;top:950px" width="36" height="36" viewBox="0 0 36 36"><circle cx="18" cy="18" r="16" fill="none" stroke="#d9dadc" stroke-width="2.800"/><circle cx="18" cy="18" r="9.500" fill="#d9dadc"/></svg>
<div class="abs plabel" style="left:1184px">录制</div>

<!-- blue share bubble -->
<svg class="abs" style="left:1326px;top:866px" width="32" height="32" viewBox="0 0 32 32"><circle cx="16" cy="16" r="16" fill="#2e8ef7"/><path d="M8.500 8h15a1.800 1.800 0 0 1 1.800 1.800v11a1.800 1.800 0 0 1-1.800 1.800h-1L16 17.200 9.500 22.600h-1a1.800 1.800 0 0 1-1.800-1.800v-11A1.800 1.800 0 0 1 8.500 8z" fill="#fff"/><path d="M16 19.500l4.300 3.700h-8.600z" fill="#fff"/></svg>

<!-- layout toggle -->
<div class="abs" style="left:1406px;top:940px;width:340px;height:64px;border-radius:24px;background:#3f4247;overflow:hidden">
  <div class="abs" style="left:111px;top:0;width:2px;height:64px;background:#383b40"></div>
  <div class="abs" style="left:228px;top:0;width:112px;height:64px;background:#d6d7d9"></div>
</div>
<svg class="abs" style="left:1444px;top:954px" width="36" height="36" viewBox="0 0 36 36"><path d="M8 0h8v36H8a8 8 0 0 1-8-8V8a8 8 0 0 1 8-8zM19.500 0H28a8 8 0 0 1 8 8v6.500H19.500zM19.500 18H36v10a8 8 0 0 1-8 8h-8.500z" fill="#9a9b9f"/></svg>
<svg class="abs" style="left:1558px;top:954px" width="36" height="36" viewBox="0 0 36 36"><path d="M8 0h8.300v16.300H0V8a8 8 0 0 1 8-8zM19.700 0H28a8 8 0 0 1 8 8v8.300H19.700zM0 19.700h16.300V36H8a8 8 0 0 1-8-8zM19.700 19.700H36V28a8 8 0 0 1-8 8h-8.300z" fill="#9a9b9f"/></svg>
<svg class="abs" style="left:1672px;top:957px" width="36" height="30" viewBox="0 0 36 30"><g stroke="#3f4247" stroke-width="5.600" stroke-linecap="round"><path d="M3 3.500h30M3 15h30M3 26.500h30"/></g></svg>
<div class="abs" style="left:1412px;top:1009.500px;width:100px;text-align:center;font-size:18px;line-height:28px;color:#a7a8aa">演讲</div>
<div class="abs" style="left:1526px;top:1009.500px;width:100px;text-align:center;font-size:18px;line-height:28px;color:#a7a8aa">宫格</div>
<div class="abs" style="left:1640px;top:1009.500px;width:100px;text-align:center;font-size:18px;line-height:28px;color:#a7a8aa">列表</div>
<div class="abs" style="left:1764px;top:1009.500px;width:100px;text-align:center;font-size:18px;line-height:28px;color:#a7a8aa">设置</div>
<!-- gear -->
<svg class="abs" style="left:1799px;top:959px" width="30" height="30" viewBox="-15 -15 30 30"><g fill="#9a9b9f"><circle r="10.500"/><g id="tooth"><rect x="-3.300" y="-14.200" width="6.600" height="7" rx="1.500"/></g><use href="#tooth" transform="rotate(60)"/><use href="#tooth" transform="rotate(120)"/><use href="#tooth" transform="rotate(180)"/><use href="#tooth" transform="rotate(240)"/><use href="#tooth" transform="rotate(300)"/></g><circle r="5" fill="#33363b"/></svg>

</body>
</html>
